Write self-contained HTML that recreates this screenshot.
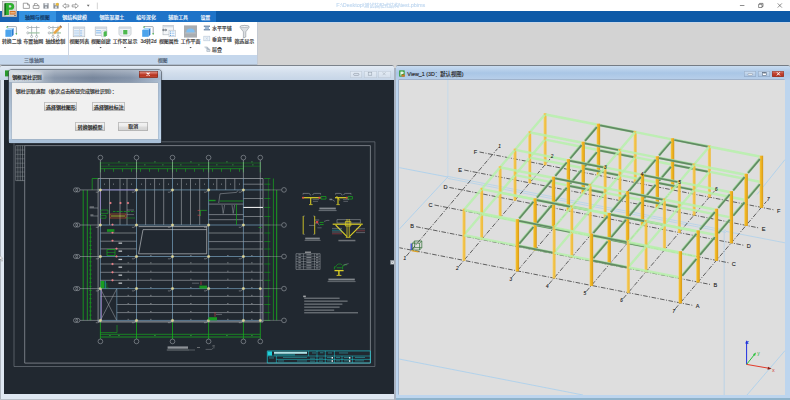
<!DOCTYPE html><html lang="zh"><head><meta charset="utf-8"><title>PBIMS</title><style>html,body{margin:0;padding:0}
body{width:790px;height:400px;overflow:hidden;position:relative;background:#d3d3d3;font-family:"Liberation Sans","Noto Sans CJK SC",sans-serif}
div,span,svg{position:absolute;box-sizing:border-box}
svg.full{left:0;top:0;width:790px;height:400px;overflow:hidden}
svg text{font-family:"Liberation Sans","Noto Sans CJK SC",sans-serif}
.sr{color:transparent;white-space:nowrap;overflow:hidden;height:1.2em;line-height:1.2em;pointer-events:none}
#titlebar{left:0;top:0;width:790px;height:11.2px;background:#fff}
#tabstrip{left:0;top:11.2px;width:790px;height:10.5px;background:#0e5aa7}
#tabstrip .tabs{left:19px;top:0;width:197px;height:10.5px;background:#1e73c8}
#tabstrip .lead{left:0;top:0;width:19px;height:10.5px;background:#1762b2}
#tabstrip .active{left:19px;top:0;width:36.7px;height:10.5px;background:#3491e0}
#ribbon{left:0;top:21.7px;width:257.2px;height:43px;background:#fff;box-shadow:0.6px 0 0 #b9c4d2}
#ribbon .grouprow{left:0;top:33.5px;width:257px;height:8.9px;background:#c5d7ec}
#ribbon .sep{top:1px;width:0.6px;height:41px;background:#ccd5e2}
#ribbonline{left:0;top:21.5px;width:790px;height:0.9px;background:#c9d6e6}
#ribbonbot{left:0;top:64.2px;width:257.4px;height:0.7px;background:#aebccd}
#appbtn{left:1.6px;top:1px;width:15.8px;height:16.3px;background:linear-gradient(#e2e2e2,#cfcfcf);box-shadow:inset 0 0 0 0.6px #9c9c9c}
#winL{left:0;top:65.3px;width:394.3px;height:334.7px;background:#dfe7f1;border-top:1px solid #7c838b;box-shadow:inset 0.7px 0 0 #9aa1a9;border-radius:2.4px 2.4px 0 0;overflow:hidden}
#winL .tb{left:0;top:0;width:394.3px;height:13.6px;background:linear-gradient(#e3ebf5,#d2deec 50%,#c6d5e7)}
#winL .content{left:3.9px;top:13.4px;width:390.2px;height:314.0px;background:#212830}
#winL .bot{left:0;top:332.4px;width:394.3px;height:1.6px;background:#b9c0c8}
#gap{left:394.2px;top:67.5px;width:2.1px;height:335px;background:#a9b3c1}
#winR{left:396.2px;top:65px;width:393.8px;height:334.7px;top:65.3px;background:#bdd5ee;border-top:1px solid #757c84;border-radius:2.4px 2.4px 0 0;overflow:hidden}
#winR .tb{left:0;top:0;width:393.8px;height:13.8px;background:linear-gradient(#c9dcf0,#a9c6e6 50%,#b9d0ea)}
#winR .content{left:2.6px;top:13.6px;width:386.4px;height:315.3px;background:#dedede;box-shadow:-0.5px -0.5px 0 0 #8796aa}
#winR .bot{left:0;top:331.4px;width:393.8px;height:2.6px;background:#8fb3cb}
.wbtn{top:4.4px;height:7.2px;box-shadow:inset 0 0 0 0.5px #b7c3d1;background:linear-gradient(#e4ecf5,#d3deeb);border-radius:1px}
.wbtnR{top:4.6px;height:6.6px;box-shadow:inset 0 0 0 0.5px #8aa2bf;background:linear-gradient(#cfdff0,#a9c3e2);border-radius:1px}
.wbtnR.close{background:linear-gradient(#d9867c,#c2412f 45%,#b0301e);box-shadow:inset 0 0 0 0.5px #8a3a30}
#dlg{left:8.6px;top:70.2px;width:152.4px;height:72.6px;border-radius:2.4px;background:linear-gradient(90deg,#c3ceda,#b0bcc9 16%,#8291a6 30%,#6f7f96 55%,#7d8da4 80%,#a3b6cc);box-shadow:0 0 0 0.6px #46505c,0 0 2.5px rgba(0,0,0,.5)}
#dlg .glass{left:0;top:0;width:100%;height:13px;background:linear-gradient(rgba(255,255,255,.35),rgba(255,255,255,.05) 60%,rgba(255,255,255,.12));border-radius:2px 2px 0 0}
#dlg .frameL{left:0;top:12px;width:3.2px;height:59.4px;background:linear-gradient(#9fb0c4,#c5d5e6)}
#dlg .frameR{right:0;top:12px;width:3.2px;height:59.4px;background:linear-gradient(#a9bed6,#c2d8ee)}
#dlg .frameB{left:0;bottom:0;width:100%;height:3.4px;background:#a9c0d8}
#dlg .client{left:3.4px;top:12.7px;width:145.8px;height:56.3px;background:#f0f0f0;box-shadow:0 0 0 0.4px #9aa6b4}
#dlg .close{left:130.6px;top:0.4px;width:19px;height:7.6px;border-radius:0 0 1.6px 1.6px;background:linear-gradient(#e0a198,#c9503f 45%,#b5301c 55%,#c4523c);box-shadow:inset 0 0 0 0.5px #6d2a22}
.dbtn{height:8.6px;box-shadow:inset 0 0 0 0.55px #9a9a9a;border-radius:1.2px;background:linear-gradient(#f4f4f4,#ececec 48%,#dddddd 52%,#d2d2d2)}
</style></head><body><div id="titlebar"></div><div id="tabstrip"><div class="lead"></div><div class="tabs"></div><div class="active"></div></div><div id="ribbonline"></div><div id="ribbon"><div class="grouprow"></div><div class="sep" style="left:68.2px"></div></div><div id="ribbonbot"></div><div id="appbtn"></div><svg class="full" viewBox="0 0 790 400"><g><path d="M4.3 3.4 L6.0 2.9 L6.0 15.0 L4.3 15.4 Z" fill="#1a6a1e"/><path d="M6.0 2.9 H10.6 Q14.2 3.0 14.2 6.4 Q14.2 9.7 10.6 9.8 H8.9 V15.0 H6.0 Z" fill="#2fb030"/><path d="M8.9 5.2 H10.2 Q11.4 5.3 11.4 6.4 Q11.4 7.5 10.2 7.6 H8.9 Z" fill="#d9d9d9"/><rect x="9.7" y="11" width="5.9" height="3.6" fill="#d8742a"/><rect x="10.4" y="12.2" width="4.4" height="1.2" fill="#f3d9b8" opacity=".8"/><rect x="14.2" y="15.3" width="1.6" height=".7" fill="#444"/></g><path d="M23.3 3.2 H27.6 L29.4 5 V8.4 H23.3 Z M27.6 3.2 V5 H29.4" fill="none" stroke="#7c7c7c" stroke-width=".7"/><path d="M33.2 5.6 H39 V8.4 H33.2 Z M34.4 5.6 V3.6 H36.6 L37.8 4.6 V5.6" fill="none" stroke="#7c7c7c" stroke-width=".7"/><rect x="43.4" y="3.2" width="5.2" height="5.4" fill="#8a8f96"/><rect x="44.6" y="3.2" width="2.8" height="2" fill="#e9eef3"/><rect x="45" y="6.4" width="2" height="2.2" fill="#d8dde3"/><rect x="53.4" y="3.2" width="5.2" height="5.4" fill="#8a8f96"/><rect x="54.6" y="3.2" width="2.8" height="2" fill="#e9eef3"/><rect x="55" y="6.4" width="2" height="2.2" fill="#d8dde3"/><circle cx="57.3" cy="4.3" r="1.5" fill="#e9b93a"/><path d="M62.6 5.9 L65.4 3.5 V4.9 H68.8 V6.9 H65.4 V8.3 Z" fill="none" stroke="#7c7c7c" stroke-width=".7"/><path d="M78.4 5.9 L75.6 3.5 V4.9 H72.2 V6.9 H75.6 V8.3 Z" fill="none" stroke="#7c7c7c" stroke-width=".7"/><path d="M86.8 4.7 H89.6 L88.2 6.7 Z" fill="#6a6a6a"/><rect x="96.9" y="2.6" width=".6" height="6.6" fill="#b5b5b5"/><g opacity="0.72"><text x="336.3" y="7.4" font-size="5.48" fill="#a9c9ea" stroke="#a9c9ea" stroke-width=".15">F:\Desktop\</text><text x="364.34" y="7.4" font-size="4.94" fill="#a9c9ea" stroke="#a9c9ea" stroke-width=".15">测试装配式结构</text><text x="398.92" y="7.4" font-size="5.48" fill="#a9c9ea" stroke="#a9c9ea" stroke-width=".15">\test.pbims</text></g><rect x="739.9" y="5.2" width="4.5" height=".6" fill="#444"/><path d="M758.6 4.3 H762 V7.5 H758.6 Z M759.6 4.3 V3.4 H763 V6.6 H762" fill="none" stroke="#444" stroke-width=".6"/><path d="M777.7 3.4 L781.9 7.6 M781.9 3.4 L777.7 7.6" stroke="#444" stroke-width=".6" fill="none"/><g><text x="25" y="19.3" font-size="4.94" fill="#0d2c52" stroke="#0d2c52" stroke-width=".15">轴网与视图</text></g><g><text x="62.3" y="19.3" font-size="4.94" fill="#fff" stroke="#fff" stroke-width=".15">钢结构建模</text></g><g><text x="99.4" y="19.3" font-size="4.94" fill="#fff" stroke="#fff" stroke-width=".15">钢筋混凝土</text></g><g><text x="136.2" y="19.3" font-size="4.94" fill="#fff" stroke="#fff" stroke-width=".15">编号深化</text></g><g><text x="168.3" y="19.3" font-size="4.94" fill="#fff" stroke="#fff" stroke-width=".15">辅助工具</text></g><g><text x="200.4" y="19.3" font-size="4.94" fill="#fff" stroke="#fff" stroke-width=".15">设置</text></g><g><text x="1.92" y="43.4" font-size="4.94" fill="#2b2b2b" stroke="#2b2b2b" stroke-width=".15">转换二维</text></g><g><text x="23.42" y="43.4" font-size="4.94" fill="#2b2b2b" stroke="#2b2b2b" stroke-width=".15">布置轴网</text></g><g><text x="45.42" y="43.4" font-size="4.94" fill="#2b2b2b" stroke="#2b2b2b" stroke-width=".15">轴线绘制</text></g><g><text x="69.42" y="43.4" font-size="4.94" fill="#2b2b2b" stroke="#2b2b2b" stroke-width=".15">视图列表</text></g><g><text x="90.92" y="43.4" font-size="4.94" fill="#2b2b2b" stroke="#2b2b2b" stroke-width=".15">视图创建</text></g><g><text x="112.65" y="43.4" font-size="4.94" fill="#2b2b2b" stroke="#2b2b2b" stroke-width=".15">工作区显示</text></g><g><text x="140.54" y="43.4" font-size="4.94" fill="#2b2b2b" stroke="#2b2b2b" stroke-width=".15">3d</text><text x="146.03" y="43.4" font-size="4.94" fill="#2b2b2b" stroke="#2b2b2b" stroke-width=".15">转</text><text x="150.97" y="43.4" font-size="4.94" fill="#2b2b2b" stroke="#2b2b2b" stroke-width=".15">2d</text></g><g><text x="158.92" y="43.4" font-size="4.94" fill="#2b2b2b" stroke="#2b2b2b" stroke-width=".15">视图属性</text></g><g><text x="180.72" y="43.4" font-size="4.94" fill="#2b2b2b" stroke="#2b2b2b" stroke-width=".15">工作平面</text></g><g><text x="234.42" y="43.4" font-size="4.94" fill="#2b2b2b" stroke="#2b2b2b" stroke-width=".15">筛选显示</text></g><path d="M99.45 46.9 h2.3 l-1.15 1.4 z" fill="#4a4a4a"/><path d="M123.85 46.9 h2.3 l-1.15 1.4 z" fill="#4a4a4a"/><path d="M189.45 46.9 h2.3 l-1.15 1.4 z" fill="#4a4a4a"/><g><text x="212" y="30.3" font-size="4.94" fill="#2b2b2b" stroke="#2b2b2b" stroke-width=".15">水平平铺</text></g><g><text x="212" y="40.7" font-size="4.94" fill="#2b2b2b" stroke="#2b2b2b" stroke-width=".15">垂直平铺</text></g><g><text x="212" y="51" font-size="4.94" fill="#2b2b2b" stroke="#2b2b2b" stroke-width=".15">层叠</text></g><g><text x="24.12" y="61.6" font-size="4.94" fill="#44546a" stroke="#44546a" stroke-width=".15">三维轴网</text></g><g><text x="157.66" y="61.6" font-size="4.94" fill="#44546a" stroke="#44546a" stroke-width=".15">视图</text></g><g transform="translate(5.4 26)"><path d="M1.6 .6 H10.4 Q11 .6 11 1.2 V7.6" fill="none" stroke="#8b949e" stroke-width=".8"/><path d="M.6 1.6 L1.9 0 L3 1.6 Z" fill="#3aa63e"/><path d="M10 7.2 L11.9 7.2 L10.9 8.9 Z" fill="#3aa63e"/><path d="M0 4 L2.2 2 H8.2 L6.2 4 Z" fill="#a6d6fa"/><path d="M6.2 4 L8.2 2 V8.8 L6.2 10.8 Z" fill="#2a7bd0"/><rect x="0" y="4" width="6.2" height="6.8" fill="#4da4ec"/></g><g transform="translate(142.2 26)"><path d="M1.6 .6 H10.4 Q11 .6 11 1.2 V7.6" fill="none" stroke="#8b949e" stroke-width=".8"/><path d="M.6 1.6 L1.9 0 L3 1.6 Z" fill="#3aa63e"/><path d="M10 7.2 L11.9 7.2 L10.9 8.9 Z" fill="#3aa63e"/><path d="M0 4 L2.2 2 H8.2 L6.2 4 Z" fill="#a6d6fa"/><path d="M6.2 4 L8.2 2 V8.8 L6.2 10.8 Z" fill="#2a7bd0"/><rect x="0" y="4" width="6.2" height="6.8" fill="#4da4ec"/></g><g transform="translate(26.6 25.9)"><path d="M2 1.6 H13 M2 7 H13 M5 0 V10 M10 0 V10" stroke="#9aa3a8" stroke-width=".7" fill="none"/><path d="M2 7 H13" stroke="#9bd49a" stroke-width=".7"/><circle cx="1.2" cy="1.6" r="1.05" fill="#fff" stroke="#7d868c" stroke-width=".5"/><circle cx="1.2" cy="7" r="1.05" fill="#fff" stroke="#7d868c" stroke-width=".5"/><circle cx="5" cy="10.6" r="1.05" fill="#fff" stroke="#7d868c" stroke-width=".5"/><circle cx="10" cy="10.6" r="1.05" fill="#fff" stroke="#7d868c" stroke-width=".5"/></g><g transform="translate(48 25.9)"><path d="M2 1.6 H13 M2 7 H13 M5 0 V10 M10 0 V10" stroke="#9aa3a8" stroke-width=".7" fill="none"/><path d="M2 7 H13" stroke="#9bd49a" stroke-width=".7"/><circle cx="1.2" cy="1.6" r="1.05" fill="#fff" stroke="#7d868c" stroke-width=".5"/><circle cx="1.2" cy="7" r="1.05" fill="#fff" stroke="#7d868c" stroke-width=".5"/><circle cx="5" cy="10.6" r="1.05" fill="#fff" stroke="#7d868c" stroke-width=".5"/><circle cx="10" cy="10.6" r="1.05" fill="#fff" stroke="#7d868c" stroke-width=".5"/><path d="M5.2 6.6 L11.6 .2 L13.3 1.9 L6.9 8.3 Z" fill="#e8a544"/><path d="M11.6 .2 L12.4 -.6 L14.1 1.1 L13.3 1.9 Z" fill="#8a5a3a"/><path d="M5.2 6.6 L6.9 8.3 L4.4 9.1 Z" fill="#f3d8a8"/></g><g transform="translate(73.2 27)"><rect x="0" y="0" width="11.6" height="9.8" fill="#f2f5f8" stroke="#aab2bb" stroke-width=".6"/><rect x=".3" y=".3" width="11" height="1.6" fill="#cfd6de"/><rect x=".9" y="3.2" width="5" height="1.3" fill="#bcd6f1"/><rect x="6.9" y="3.2" width="3.8" height="1.3" fill="#dbe7f4"/><rect x="7.2" y="3.3000000000000003" width="1.2" height="1.1" fill="#7fb1e6"/><rect x=".9" y="5.4" width="5" height="1.3" fill="#bcd6f1"/><rect x="6.9" y="5.4" width="3.8" height="1.3" fill="#dbe7f4"/><rect x="7.2" y="5.5" width="1.2" height="1.1" fill="#7fb1e6"/><rect x=".9" y="7.6" width="5" height="1.3" fill="#bcd6f1"/><rect x="6.9" y="7.6" width="3.8" height="1.3" fill="#dbe7f4"/><rect x="7.2" y="7.699999999999999" width="1.2" height="1.1" fill="#7fb1e6"/><rect x="6.1" y="2" width=".5" height="7.8" fill="#b7bfc8"/></g><g transform="translate(95.2 27)"><rect x="0" y="0" width="11.6" height="8.6" fill="#f2f5f8" stroke="#aab2bb" stroke-width=".6"/><rect x=".3" y=".3" width="11" height="1.6" fill="#cfd6de"/><rect x=".9" y="3.0" width="5" height="1.3" fill="#9cc7f0"/><rect x=".9" y="5.2" width="5" height="1.3" fill="#9cc7f0"/><path d="M6.2 4.6 L8 3.4 H11.6 V8.4 L9.8 9.8 H6.2 Z" fill="#eef1f4" stroke="#aab2bb" stroke-width=".4"/><path d="M8.4 5.2 L9.6 4.2 H11.6 V8.2 L10.4 9.4 H8.4 Z" fill="#4cb84e"/></g><g transform="translate(119 27)"><path d="M0 0 H12 V7.2 L10.4 9 H1.6 L0 7.2 Z" fill="#f2f5f8" stroke="#aab2bb" stroke-width=".6"/><rect x=".3" y=".3" width="11.4" height="1.5" fill="#cfd6de"/><rect x="4.2" y="3" width="4.2" height="4.4" fill="#4cb84e"/><rect x="1" y="3" width="2.4" height="4.4" fill="#dde4ec"/><rect x="9.2" y="3" width="1.9" height="4.4" fill="#dde4ec"/></g><g transform="translate(162 25.6)"><rect x="1" y="0" width="10.6" height="9.2" fill="#f4f6f8" stroke="#aab2bb" stroke-width=".6"/><rect x="1.3" y=".3" width="10" height="1.4" fill="#d4dae1"/><path d="M0 4.4 L1.6 3 V3.9 H3.6 V3 L5.2 4.4 L3.6 5.8 V4.9 H1.6 V5.8 Z" fill="#6b737b"/><rect x="7" y="4.6" width="6.4" height="6.6" fill="#fbfcfd" stroke="#aab2bb" stroke-width=".5"/><rect x="7.9" y="5.8" width="1" height="1" fill="#5b9bd8"/><rect x="9.5" y="5.8999999999999995" width="3" height=".8" fill="#9cc7f0"/><rect x="7.9" y="7.6" width="1" height="1" fill="#5b9bd8"/><rect x="9.5" y="7.699999999999999" width="3" height=".8" fill="#9cc7f0"/><rect x="7.9" y="9.4" width="1" height="1" fill="#5b9bd8"/><rect x="9.5" y="9.5" width="3" height=".8" fill="#9cc7f0"/></g><rect x="184" y="25.4" width="13" height="12.2" fill="#a9adb1"/><path d="M186.2 32.6 Q186.2 28.6 190.5 28.6 Q194.8 28.6 194.8 32.6 Z" fill="#7fbff2"/><path d="M185 33 H196" stroke="#cfd3d6" stroke-width=".5"/><path d="M203.8 26.2 H210 M203.8 29.8 H210" stroke="#3d5f86" stroke-width="1"/><rect x="204.8" y="26.7" width="4.2" height="2.6" fill="#9fb8d4"/><rect x="203.8" y="36.2" width="6" height="4.6" fill="#eaf1f8" stroke="#b7c7d8" stroke-width=".6"/><path d="M205.6 37.4 l2.4 2.2 m0 -2.2 l-2.4 2.2" stroke="#b7c7d8" stroke-width=".5"/><path d="M204.4 47 H207.4 V49 M205.6 48.2 H208.8 V50.2 M206.8 49.4 H210 V51.4 H206.8 Z" fill="#dfe7ef" stroke="#8d9aa8" stroke-width=".5"/><path d="M240.2 26.2 Q244.6 24.4 249 26.2 V27.6 L245.8 31.8 V37 L243.4 38 V31.8 L240.2 27.6 Z" fill="#dcdfe2" stroke="#8e959c" stroke-width=".6"/><ellipse cx="244.6" cy="26.5" rx="4.2" ry="1" fill="#f4f5f6" stroke="#8e959c" stroke-width=".5"/></svg><div id="chrome-text"><span class="sr" style="left:336.3px;top:2.95px;font-size:4.94px;width:90.13px">F:\Desktop\测试装配式结构\test.pbims</span><span class="sr" style="left:25px;top:14.85px;font-size:4.94px;width:25.7px">轴网与视图</span><span class="sr" style="left:62.3px;top:14.85px;font-size:4.94px;width:25.7px">钢结构建模</span><span class="sr" style="left:99.4px;top:14.85px;font-size:4.94px;width:25.7px">钢筋混凝土</span><span class="sr" style="left:136.2px;top:14.85px;font-size:4.94px;width:20.76px">编号深化</span><span class="sr" style="left:168.3px;top:14.85px;font-size:4.94px;width:20.76px">辅助工具</span><span class="sr" style="left:200.4px;top:14.85px;font-size:4.94px;width:10.88px">设置</span><span class="sr" style="left:1.92px;top:38.95px;font-size:4.94px;width:20.76px">转换二维</span><span class="sr" style="left:23.42px;top:38.95px;font-size:4.94px;width:20.76px">布置轴网</span><span class="sr" style="left:45.42px;top:38.95px;font-size:4.94px;width:20.76px">轴线绘制</span><span class="sr" style="left:69.42px;top:38.95px;font-size:4.94px;width:20.76px">视图列表</span><span class="sr" style="left:90.92px;top:38.95px;font-size:4.94px;width:20.76px">视图创建</span><span class="sr" style="left:112.65px;top:38.95px;font-size:4.94px;width:25.7px">工作区显示</span><span class="sr" style="left:140.54px;top:38.95px;font-size:4.94px;width:16.93px">3d转2d</span><span class="sr" style="left:158.92px;top:38.95px;font-size:4.94px;width:20.76px">视图属性</span><span class="sr" style="left:180.72px;top:38.95px;font-size:4.94px;width:20.76px">工作平面</span><span class="sr" style="left:234.42px;top:38.95px;font-size:4.94px;width:20.76px">筛选显示</span><span class="sr" style="left:212px;top:25.85px;font-size:4.94px;width:20.76px">水平平铺</span><span class="sr" style="left:212px;top:36.25px;font-size:4.94px;width:20.76px">垂直平铺</span><span class="sr" style="left:212px;top:46.55px;font-size:4.94px;width:10.88px">层叠</span><span class="sr" style="left:24.12px;top:57.15px;font-size:4.94px;width:20.76px">三维轴网</span><span class="sr" style="left:157.66px;top:57.15px;font-size:4.94px;width:10.88px">视图</span></div><div id="winL"><div class="tb"></div><div class="wbtn" style="left:350.3px;width:12.2px"></div><div class="wbtn" style="left:363.5px;width:13.2px"></div><div class="wbtn" style="left:377.6px;width:13.2px"></div><div class="content"></div><div class="bot"></div></div><div id="gap"></div><svg class="full" viewBox="0 0 790 400"><defs><clipPath id="cadclip"><rect x="3.9" y="79.6" width="390.2" height="314.2"/></clipPath></defs><g fill="none"><rect x="353.6" y="73.4" width="5.4" height="2" rx="1" fill="none" stroke="#7c8794" stroke-width=".5"/><rect x="368.2" y="72.2" width="3.6" height="3" fill="none" stroke="#8d98a5" stroke-width=".5"/><path d="M382.6 72.2 l3 3 m0 -3 l-3 3" stroke="#a6b0bb" stroke-width=".6"/><rect x="5" y="70.4" width="4" height="6" fill="#2a9a2e"/><path d="M14 141.8 H374.9 V366.5 H14 Z" stroke="#7b8289" stroke-width="0.6" fill="none"/><path d="M24.7 145.6 H370.4 V363.1 H24.7 Z" stroke="#989ea5" stroke-width="0.7" fill="none"/><path d="M15.7 145.6 H24.7 M15.7 145.6 V180.6 H24.7" stroke="#a0a6ac" stroke-width="0.5" fill="none"/><path d="M17.9 145.6 L17.9 180.6" stroke="#aab0b6" stroke-width="0.45"/><path d="M20.2 145.6 L20.2 180.6" stroke="#aab0b6" stroke-width="0.45"/><path d="M22.5 145.6 L22.5 180.6" stroke="#aab0b6" stroke-width="0.45"/><path d="M15.7 150 L24.8 150" stroke="#9aa0a6" stroke-width="0.35"/><path d="M15.7 154.4 L24.8 154.4" stroke="#9aa0a6" stroke-width="0.35"/><path d="M15.7 158.8 L24.8 158.8" stroke="#9aa0a6" stroke-width="0.35"/><path d="M15.7 163.2 L24.8 163.2" stroke="#9aa0a6" stroke-width="0.35"/><path d="M15.7 167.6 L24.8 167.6" stroke="#9aa0a6" stroke-width="0.35"/><path d="M15.7 172 L24.8 172" stroke="#9aa0a6" stroke-width="0.35"/><path d="M15.7 176.3 L24.8 176.3" stroke="#9aa0a6" stroke-width="0.35"/><path d="M100.4 163 L260.3 163" stroke="#128319" stroke-width="0.6"/><path d="M100.4 166.2 L260.3 166.2" stroke="#128319" stroke-width="0.6"/><path d="M100.4 168.7 L243.4 168.7" stroke="#17ab1e" stroke-width="0.65"/><path d="M104.5 168.7 L104.5 171.8" stroke="#17ab1e" stroke-width="0.6"/><path d="M113.5 168.7 L113.5 171.8" stroke="#17ab1e" stroke-width="0.6"/><path d="M122.5 168.7 L122.5 171.8" stroke="#17ab1e" stroke-width="0.6"/><path d="M131.5 168.7 L131.5 171.8" stroke="#17ab1e" stroke-width="0.6"/><path d="M140.5 168.7 L140.5 171.8" stroke="#17ab1e" stroke-width="0.6"/><path d="M149.5 168.7 L149.5 171.8" stroke="#17ab1e" stroke-width="0.6"/><path d="M158.5 168.7 L158.5 171.8" stroke="#17ab1e" stroke-width="0.6"/><path d="M167.5 168.7 L167.5 171.8" stroke="#17ab1e" stroke-width="0.6"/><path d="M176.5 168.7 L176.5 171.8" stroke="#17ab1e" stroke-width="0.6"/><path d="M185.5 168.7 L185.5 171.8" stroke="#17ab1e" stroke-width="0.6"/><path d="M194.5 168.7 L194.5 171.8" stroke="#17ab1e" stroke-width="0.6"/><path d="M203.5 168.7 L203.5 171.8" stroke="#17ab1e" stroke-width="0.6"/><path d="M212.5 168.7 L212.5 171.8" stroke="#17ab1e" stroke-width="0.6"/><path d="M221.5 168.7 L221.5 171.8" stroke="#17ab1e" stroke-width="0.6"/><path d="M230.5 168.7 L230.5 171.8" stroke="#17ab1e" stroke-width="0.6"/><path d="M239.5 168.7 L239.5 171.8" stroke="#17ab1e" stroke-width="0.6"/><path d="M100.4 162 L100.4 172.4" stroke="#17ab1e" stroke-width="0.8"/><path d="M136.5 162 L136.5 172.4" stroke="#17ab1e" stroke-width="0.8"/><path d="M172.5 162 L172.5 172.4" stroke="#17ab1e" stroke-width="0.8"/><path d="M208.6 162 L208.6 172.4" stroke="#17ab1e" stroke-width="0.8"/><path d="M243.4 162 L243.4 172.4" stroke="#17ab1e" stroke-width="0.8"/><path d="M260.3 162 L260.3 172.4" stroke="#17ab1e" stroke-width="0.8"/><path d="M100.4 334.3 L260.3 334.3" stroke="#17ab1e" stroke-width="0.7"/><path d="M100.4 337 L260.3 337" stroke="#17ab1e" stroke-width="0.8"/><path d="M100.4 332.6 L117 332.6" stroke="#17ab1e" stroke-width="0.6"/><path d="M117 325 L117 332.6" stroke="#17ab1e" stroke-width="0.6"/><path d="M100.4 322 L100.4 339" stroke="#17ab1e" stroke-width="0.8"/><path d="M136.5 322 L136.5 339" stroke="#17ab1e" stroke-width="0.8"/><path d="M172.5 322 L172.5 339" stroke="#17ab1e" stroke-width="0.8"/><path d="M208.6 322 L208.6 339" stroke="#17ab1e" stroke-width="0.8"/><path d="M243.4 322 L243.4 339" stroke="#17ab1e" stroke-width="0.8"/><path d="M260.3 322 L260.3 339" stroke="#17ab1e" stroke-width="0.8"/><path d="M83.2 190 L83.2 320.4" stroke="#17ab1e" stroke-width="0.8"/><path d="M87.3 190 L87.3 320.4" stroke="#17ab1e" stroke-width="0.8"/><path d="M90.4 225 L90.4 320.4" stroke="#17ab1e" stroke-width="0.7"/><path d="M89.1 229 L91.8 229" stroke="#17ab1e" stroke-width="0.5"/><path d="M89.1 233.1 L91.8 233.1" stroke="#17ab1e" stroke-width="0.5"/><path d="M89.1 237.2 L91.8 237.2" stroke="#17ab1e" stroke-width="0.5"/><path d="M89.1 241.3 L91.8 241.3" stroke="#17ab1e" stroke-width="0.5"/><path d="M89.1 245.4 L91.8 245.4" stroke="#17ab1e" stroke-width="0.5"/><path d="M89.1 249.5 L91.8 249.5" stroke="#17ab1e" stroke-width="0.5"/><path d="M89.1 253.6 L91.8 253.6" stroke="#17ab1e" stroke-width="0.5"/><path d="M89.1 257.7 L91.8 257.7" stroke="#17ab1e" stroke-width="0.5"/><path d="M89.1 261.8 L91.8 261.8" stroke="#17ab1e" stroke-width="0.5"/><path d="M89.1 265.9 L91.8 265.9" stroke="#17ab1e" stroke-width="0.5"/><path d="M89.1 270 L91.8 270" stroke="#17ab1e" stroke-width="0.5"/><path d="M89.1 274.1 L91.8 274.1" stroke="#17ab1e" stroke-width="0.5"/><path d="M89.1 278.2 L91.8 278.2" stroke="#17ab1e" stroke-width="0.5"/><path d="M89.1 282.3 L91.8 282.3" stroke="#17ab1e" stroke-width="0.5"/><path d="M89.1 286.4 L91.8 286.4" stroke="#17ab1e" stroke-width="0.5"/><path d="M89.1 290.5 L91.8 290.5" stroke="#17ab1e" stroke-width="0.5"/><path d="M89.1 294.6 L91.8 294.6" stroke="#17ab1e" stroke-width="0.5"/><path d="M89.1 298.7 L91.8 298.7" stroke="#17ab1e" stroke-width="0.5"/><path d="M89.1 302.8 L91.8 302.8" stroke="#17ab1e" stroke-width="0.5"/><path d="M89.1 306.9 L91.8 306.9" stroke="#17ab1e" stroke-width="0.5"/><path d="M89.1 311 L91.8 311" stroke="#17ab1e" stroke-width="0.5"/><path d="M89.1 315.1 L91.8 315.1" stroke="#17ab1e" stroke-width="0.5"/><path d="M89.1 319.2 L91.8 319.2" stroke="#17ab1e" stroke-width="0.5"/><path d="M92.2 178.5 L92.2 190" stroke="#17ab1e" stroke-width="0.7"/><path d="M92.2 178.5 L98 178.5" stroke="#17ab1e" stroke-width="0.7"/><path d="M268.4 178.5 L268.4 320.4" stroke="#128319" stroke-width="0.6"/><path d="M273.4 178.5 L273.4 320.4" stroke="#17ab1e" stroke-width="0.7"/><path d="M276.7 190 L276.7 320.4" stroke="#17ab1e" stroke-width="0.9"/><path d="M264.2 178.5 L270.4 178.5" stroke="#17ab1e" stroke-width="0.55"/><path d="M264.2 184.2 L270.4 184.2" stroke="#17ab1e" stroke-width="0.55"/><path d="M264.2 189.9 L270.4 189.9" stroke="#17ab1e" stroke-width="0.55"/><path d="M264.2 198.5 L270.4 198.5" stroke="#17ab1e" stroke-width="0.55"/><path d="M264.2 207.4 L270.4 207.4" stroke="#17ab1e" stroke-width="0.55"/><path d="M264.2 216.5 L270.4 216.5" stroke="#17ab1e" stroke-width="0.55"/><path d="M264.2 225 L270.4 225" stroke="#17ab1e" stroke-width="0.55"/><path d="M264.2 233 L270.4 233" stroke="#17ab1e" stroke-width="0.55"/><path d="M264.2 241.6 L270.4 241.6" stroke="#17ab1e" stroke-width="0.55"/><path d="M264.2 249 L270.4 249" stroke="#17ab1e" stroke-width="0.55"/><path d="M264.2 256.5 L270.4 256.5" stroke="#17ab1e" stroke-width="0.55"/><path d="M264.2 264 L270.4 264" stroke="#17ab1e" stroke-width="0.55"/><path d="M264.2 272.3 L270.4 272.3" stroke="#17ab1e" stroke-width="0.55"/><path d="M264.2 280.3 L270.4 280.3" stroke="#17ab1e" stroke-width="0.55"/><path d="M264.2 288.6 L270.4 288.6" stroke="#17ab1e" stroke-width="0.55"/><path d="M264.2 296.4 L270.4 296.4" stroke="#17ab1e" stroke-width="0.55"/><path d="M264.2 304.5 L270.4 304.5" stroke="#17ab1e" stroke-width="0.55"/><path d="M264.2 312.6 L270.4 312.6" stroke="#17ab1e" stroke-width="0.55"/><path d="M264.2 320.4 L270.4 320.4" stroke="#17ab1e" stroke-width="0.55"/><circle cx="100.4" cy="157.6" r="2.35" stroke="#a6abb0" stroke-width="0.55" fill="none"/><path d="M100.4 160 L100.4 178.5" stroke="#a6abb0" stroke-width="0.6"/><circle cx="100.4" cy="341.4" r="2.35" stroke="#a6abb0" stroke-width="0.55" fill="none"/><circle cx="136.5" cy="157.6" r="2.35" stroke="#a6abb0" stroke-width="0.55" fill="none"/><path d="M136.5 160 L136.5 178.5" stroke="#a6abb0" stroke-width="0.6"/><circle cx="136.5" cy="341.4" r="2.35" stroke="#a6abb0" stroke-width="0.55" fill="none"/><circle cx="172.5" cy="157.6" r="2.35" stroke="#a6abb0" stroke-width="0.55" fill="none"/><path d="M172.5 160 L172.5 178.5" stroke="#a6abb0" stroke-width="0.6"/><circle cx="172.5" cy="341.4" r="2.35" stroke="#a6abb0" stroke-width="0.55" fill="none"/><circle cx="208.6" cy="157.6" r="2.35" stroke="#a6abb0" stroke-width="0.55" fill="none"/><path d="M208.6 160 L208.6 178.5" stroke="#a6abb0" stroke-width="0.6"/><circle cx="208.6" cy="341.4" r="2.35" stroke="#a6abb0" stroke-width="0.55" fill="none"/><circle cx="243.4" cy="157.6" r="2.35" stroke="#a6abb0" stroke-width="0.55" fill="none"/><path d="M243.4 160 L243.4 178.5" stroke="#a6abb0" stroke-width="0.6"/><circle cx="243.4" cy="341.4" r="2.35" stroke="#a6abb0" stroke-width="0.55" fill="none"/><circle cx="260.3" cy="157.6" r="2.35" stroke="#a6abb0" stroke-width="0.55" fill="none"/><path d="M260.3 160 L260.3 178.5" stroke="#a6abb0" stroke-width="0.6"/><circle cx="260.3" cy="341.4" r="2.35" stroke="#a6abb0" stroke-width="0.55" fill="none"/><circle cx="75.6" cy="189.9" r="2.1" stroke="#a6abb0" stroke-width="0.55" fill="none"/><circle cx="77.8" cy="189.9" r="2.1" stroke="#a6abb0" stroke-width="0.55" fill="none"/><path d="M80 189.9 L100.4 189.9" stroke="#a6abb0" stroke-width="0.55"/><circle cx="284" cy="189.9" r="2.35" stroke="#a6abb0" stroke-width="0.55" fill="none"/><path d="M263 189.9 L281.6 189.9" stroke="#a6abb0" stroke-width="0.5" opacity="0.8"/><circle cx="75.6" cy="225" r="2.1" stroke="#a6abb0" stroke-width="0.55" fill="none"/><circle cx="77.8" cy="225" r="2.1" stroke="#a6abb0" stroke-width="0.55" fill="none"/><path d="M80 225 L100.4 225" stroke="#a6abb0" stroke-width="0.55"/><circle cx="284" cy="225" r="2.35" stroke="#a6abb0" stroke-width="0.55" fill="none"/><path d="M263 225 L281.6 225" stroke="#a6abb0" stroke-width="0.5" opacity="0.8"/><circle cx="75.6" cy="256.5" r="2.1" stroke="#a6abb0" stroke-width="0.55" fill="none"/><circle cx="77.8" cy="256.5" r="2.1" stroke="#a6abb0" stroke-width="0.55" fill="none"/><path d="M80 256.5 L100.4 256.5" stroke="#a6abb0" stroke-width="0.55"/><circle cx="284" cy="256.5" r="2.35" stroke="#a6abb0" stroke-width="0.55" fill="none"/><path d="M263 256.5 L281.6 256.5" stroke="#a6abb0" stroke-width="0.5" opacity="0.8"/><circle cx="75.6" cy="288.6" r="2.1" stroke="#a6abb0" stroke-width="0.55" fill="none"/><circle cx="77.8" cy="288.6" r="2.1" stroke="#a6abb0" stroke-width="0.55" fill="none"/><path d="M80 288.6 L100.4 288.6" stroke="#a6abb0" stroke-width="0.55"/><circle cx="284" cy="288.6" r="2.35" stroke="#a6abb0" stroke-width="0.55" fill="none"/><path d="M263 288.6 L281.6 288.6" stroke="#a6abb0" stroke-width="0.5" opacity="0.8"/><circle cx="75.6" cy="320.4" r="2.1" stroke="#a6abb0" stroke-width="0.55" fill="none"/><circle cx="77.8" cy="320.4" r="2.1" stroke="#a6abb0" stroke-width="0.55" fill="none"/><path d="M80 320.4 L100.4 320.4" stroke="#a6abb0" stroke-width="0.55"/><circle cx="284" cy="320.4" r="2.35" stroke="#a6abb0" stroke-width="0.55" fill="none"/><path d="M263 320.4 L281.6 320.4" stroke="#a6abb0" stroke-width="0.5" opacity="0.8"/><path d="M98.1 322 V178.5 H263 V322" stroke="#a6abb0" stroke-width="0.7" fill="none"/><path d="M98.1 321.9 L263 321.9" stroke="#d2d5d8" stroke-width="0.7"/><path d="M109.5 178.5 L109.5 225" stroke="#a6abb0" stroke-width="0.6"/><path d="M120 178.5 L120 225" stroke="#a6abb0" stroke-width="0.6"/><path d="M127 178.5 L127 225" stroke="#a6abb0" stroke-width="0.6"/><path d="M145.6 178.5 L145.6 225" stroke="#a6abb0" stroke-width="0.6"/><path d="M154.6 178.5 L154.6 225" stroke="#a6abb0" stroke-width="0.6"/><path d="M163.7 178.5 L163.7 225" stroke="#a6abb0" stroke-width="0.6"/><path d="M181.4 178.5 L181.4 225" stroke="#a6abb0" stroke-width="0.6"/><path d="M190.5 178.5 L190.5 225" stroke="#a6abb0" stroke-width="0.6"/><path d="M199.7 178.5 L199.7 225" stroke="#a6abb0" stroke-width="0.6"/><path d="M216.8 178.5 L216.8 190" stroke="#a6abb0" stroke-width="0.6"/><path d="M225.7 178.5 L225.7 190" stroke="#a6abb0" stroke-width="0.6"/><path d="M234.8 178.5 L234.8 190" stroke="#a6abb0" stroke-width="0.6"/><path d="M100.4 178.5 L100.4 322" stroke="#7199b6" stroke-width="0.75"/><path d="M136.5 178.5 L136.5 322" stroke="#7199b6" stroke-width="0.75"/><path d="M172.5 178.5 L172.5 322" stroke="#7199b6" stroke-width="0.75"/><path d="M208.6 178.5 L208.6 322" stroke="#7199b6" stroke-width="0.75"/><path d="M243.4 178.5 L243.4 322" stroke="#7199b6" stroke-width="0.75"/><path d="M260.3 178.5 L260.3 322" stroke="#aab4bd" stroke-width="0.6"/><path d="M98.1 189.9 L263 189.9" stroke="#7199b6" stroke-width="0.75"/><path d="M98.1 225 L263 225" stroke="#7199b6" stroke-width="0.75"/><path d="M98.1 256.5 L263 256.5" stroke="#7199b6" stroke-width="0.75"/><path d="M98.1 288.6 L263 288.6" stroke="#7199b6" stroke-width="0.75"/><path d="M98.1 320.4 L263 320.4" stroke="#7199b6" stroke-width="0.75"/><path d="M100.4 189.9 L136.5 189.9" stroke="#a286cb" stroke-width="0.8"/><path d="M100.4 190 L100.4 225" stroke="#a286cb" stroke-width="0.8"/><path d="M101.4 289 L101.4 320" stroke="#a286cb" stroke-width="0.8"/><path d="M262 289 L262 320" stroke="#a286cb" stroke-width="0.6" opacity="0.8"/><path d="M100.4 233 L136.5 233" stroke="#a6abb0" stroke-width="0.6"/><path d="M100.4 241.2 L136.5 241.2" stroke="#a6abb0" stroke-width="0.6"/><path d="M100.4 248.9 L136.5 248.9" stroke="#a6abb0" stroke-width="0.6"/><path d="M100.4 264 L263 264" stroke="#a6abb0" stroke-width="0.6"/><path d="M100.4 272.3 L263 272.3" stroke="#a6abb0" stroke-width="0.6"/><path d="M100.4 280.3 L263 280.3" stroke="#a6abb0" stroke-width="0.6"/><path d="M116.8 296.4 L263 296.4" stroke="#a6abb0" stroke-width="0.6"/><path d="M116.8 304.5 L263 304.5" stroke="#a6abb0" stroke-width="0.6"/><path d="M116.8 312.6 L263 312.6" stroke="#a6abb0" stroke-width="0.6"/><path d="M100.4 296.4 L116.8 296.4" stroke="#a6abb0" stroke-width="0.5"/><path d="M116.8 288.6 L116.8 320.4" stroke="#7199b6" stroke-width="0.7"/><path d="M100.6 289 L116.6 320.2 M116.6 289 L100.6 320.2" stroke="#a6abb0" stroke-width="0.5" fill="none"/><path d="M208.6 204.1 L243.4 204.1" stroke="#a6abb0" stroke-width="0.6"/><path d="M208.6 214.6 L243.4 214.6" stroke="#a6abb0" stroke-width="0.6"/><path d="M208.6 219.7 L243.4 219.7" stroke="#a6abb0" stroke-width="0.6"/><path d="M208.6 233 L243.4 233" stroke="#a6abb0" stroke-width="0.6"/><path d="M208.6 241.6 L243.4 241.6" stroke="#a6abb0" stroke-width="0.6"/><path d="M208.6 249 L243.4 249" stroke="#a6abb0" stroke-width="0.6"/><path d="M243.4 184.2 L263 184.2" stroke="#a6abb0" stroke-width="0.6"/><path d="M243.4 198.5 L263 198.5" stroke="#a6abb0" stroke-width="0.6"/><path d="M243.4 216.5 L263 216.5" stroke="#a6abb0" stroke-width="0.6"/><path d="M243.4 233 L263 233" stroke="#a6abb0" stroke-width="0.6"/><path d="M243.4 241.6 L263 241.6" stroke="#a6abb0" stroke-width="0.6"/><path d="M243.4 249 L263 249" stroke="#a6abb0" stroke-width="0.6"/><path d="M243.4 207.4 L263 207.4" stroke="#fff" stroke-width="1.0"/><path d="M138.6 226.6 H206.7 V253.8 H138.6 L143 229.6 H206.7" stroke="#d2d5d8" stroke-width="0.6" fill="none"/><path d="M218.7 203 L220 193.8 L236.5 192.4 L238 190.4" stroke="#a6abb0" stroke-width="0.5" fill="none"/><path d="M222 205 L223.2 213.5 L224.6 205 M232 205 L233.2 213.5 L234.6 205" stroke="#a6abb0" stroke-width="0.45" fill="none"/><circle cx="100.4" cy="189.9" r="1.25" stroke="#dfd9a4" stroke-width="0.3" fill="#dcd596"/><path d="M99.8 190.8 l-2.2 1.4 h-1.8" stroke="#d8dadc" stroke-width="0.4" fill="none"/><circle cx="100.4" cy="225" r="1.25" stroke="#dfd9a4" stroke-width="0.3" fill="#dcd596"/><path d="M99.8 225.9 l-2.2 1.4 h-1.8" stroke="#d8dadc" stroke-width="0.4" fill="none"/><circle cx="100.4" cy="256.5" r="1.25" stroke="#dfd9a4" stroke-width="0.3" fill="#dcd596"/><path d="M99.8 257.4 l-2.2 1.4 h-1.8" stroke="#d8dadc" stroke-width="0.4" fill="none"/><circle cx="100.4" cy="288.6" r="1.25" stroke="#dfd9a4" stroke-width="0.3" fill="#dcd596"/><path d="M99.8 289.5 l-2.2 1.4 h-1.8" stroke="#d8dadc" stroke-width="0.4" fill="none"/><circle cx="100.4" cy="320.4" r="1.25" stroke="#dfd9a4" stroke-width="0.3" fill="#dcd596"/><path d="M99.8 321.3 l-2.2 1.4 h-1.8" stroke="#d8dadc" stroke-width="0.4" fill="none"/><circle cx="136.5" cy="189.9" r="1.25" stroke="#dfd9a4" stroke-width="0.3" fill="#dcd596"/><path d="M135.9 190.8 l-2.2 1.4 h-1.8" stroke="#d8dadc" stroke-width="0.4" fill="none"/><circle cx="136.5" cy="225" r="1.25" stroke="#dfd9a4" stroke-width="0.3" fill="#dcd596"/><path d="M135.9 225.9 l-2.2 1.4 h-1.8" stroke="#d8dadc" stroke-width="0.4" fill="none"/><circle cx="136.5" cy="256.5" r="1.25" stroke="#dfd9a4" stroke-width="0.3" fill="#dcd596"/><path d="M135.9 257.4 l-2.2 1.4 h-1.8" stroke="#d8dadc" stroke-width="0.4" fill="none"/><circle cx="136.5" cy="288.6" r="1.25" stroke="#dfd9a4" stroke-width="0.3" fill="#dcd596"/><path d="M135.9 289.5 l-2.2 1.4 h-1.8" stroke="#d8dadc" stroke-width="0.4" fill="none"/><circle cx="136.5" cy="320.4" r="1.25" stroke="#dfd9a4" stroke-width="0.3" fill="#dcd596"/><path d="M135.9 321.3 l-2.2 1.4 h-1.8" stroke="#d8dadc" stroke-width="0.4" fill="none"/><circle cx="172.5" cy="189.9" r="1.25" stroke="#dfd9a4" stroke-width="0.3" fill="#dcd596"/><path d="M171.9 190.8 l-2.2 1.4 h-1.8" stroke="#d8dadc" stroke-width="0.4" fill="none"/><circle cx="172.5" cy="225" r="1.25" stroke="#dfd9a4" stroke-width="0.3" fill="#dcd596"/><path d="M171.9 225.9 l-2.2 1.4 h-1.8" stroke="#d8dadc" stroke-width="0.4" fill="none"/><circle cx="172.5" cy="256.5" r="1.25" stroke="#dfd9a4" stroke-width="0.3" fill="#dcd596"/><path d="M171.9 257.4 l-2.2 1.4 h-1.8" stroke="#d8dadc" stroke-width="0.4" fill="none"/><circle cx="172.5" cy="288.6" r="1.25" stroke="#dfd9a4" stroke-width="0.3" fill="#dcd596"/><path d="M171.9 289.5 l-2.2 1.4 h-1.8" stroke="#d8dadc" stroke-width="0.4" fill="none"/><circle cx="172.5" cy="320.4" r="1.25" stroke="#dfd9a4" stroke-width="0.3" fill="#dcd596"/><path d="M171.9 321.3 l-2.2 1.4 h-1.8" stroke="#d8dadc" stroke-width="0.4" fill="none"/><circle cx="208.6" cy="189.9" r="1.25" stroke="#dfd9a4" stroke-width="0.3" fill="#dcd596"/><path d="M208 190.8 l-2.2 1.4 h-1.8" stroke="#d8dadc" stroke-width="0.4" fill="none"/><circle cx="208.6" cy="225" r="1.25" stroke="#dfd9a4" stroke-width="0.3" fill="#dcd596"/><path d="M208 225.9 l-2.2 1.4 h-1.8" stroke="#d8dadc" stroke-width="0.4" fill="none"/><circle cx="208.6" cy="256.5" r="1.25" stroke="#dfd9a4" stroke-width="0.3" fill="#dcd596"/><path d="M208 257.4 l-2.2 1.4 h-1.8" stroke="#d8dadc" stroke-width="0.4" fill="none"/><circle cx="208.6" cy="288.6" r="1.25" stroke="#dfd9a4" stroke-width="0.3" fill="#dcd596"/><path d="M208 289.5 l-2.2 1.4 h-1.8" stroke="#d8dadc" stroke-width="0.4" fill="none"/><circle cx="208.6" cy="320.4" r="1.25" stroke="#dfd9a4" stroke-width="0.3" fill="#dcd596"/><path d="M208 321.3 l-2.2 1.4 h-1.8" stroke="#d8dadc" stroke-width="0.4" fill="none"/><circle cx="243.4" cy="189.9" r="1.25" stroke="#dfd9a4" stroke-width="0.3" fill="#dcd596"/><path d="M242.8 190.8 l-2.2 1.4 h-1.8" stroke="#d8dadc" stroke-width="0.4" fill="none"/><circle cx="243.4" cy="225" r="1.25" stroke="#dfd9a4" stroke-width="0.3" fill="#dcd596"/><path d="M242.8 225.9 l-2.2 1.4 h-1.8" stroke="#d8dadc" stroke-width="0.4" fill="none"/><circle cx="243.4" cy="256.5" r="1.25" stroke="#dfd9a4" stroke-width="0.3" fill="#dcd596"/><path d="M242.8 257.4 l-2.2 1.4 h-1.8" stroke="#d8dadc" stroke-width="0.4" fill="none"/><circle cx="243.4" cy="288.6" r="1.25" stroke="#dfd9a4" stroke-width="0.3" fill="#dcd596"/><path d="M242.8 289.5 l-2.2 1.4 h-1.8" stroke="#d8dadc" stroke-width="0.4" fill="none"/><circle cx="243.4" cy="320.4" r="1.25" stroke="#dfd9a4" stroke-width="0.3" fill="#dcd596"/><path d="M242.8 321.3 l-2.2 1.4 h-1.8" stroke="#d8dadc" stroke-width="0.4" fill="none"/><circle cx="260.3" cy="288.6" r="1.2" stroke="#dfd9a4" stroke-width="0.3" fill="#dcd596"/><circle cx="260.3" cy="320.4" r="1.2" stroke="#dfd9a4" stroke-width="0.3" fill="#dcd596"/><rect x="100.8" y="210" width="7.2" height="3.4" fill="none"/><path d="M100.8 210 h7.2 v3.4 h-7.2 z" stroke="#17ab1e" stroke-width="0.6" fill="none"/><path d="M100.8 215.4 h5.2 v2.8 h-5.2 z" stroke="#17ab1e" stroke-width="0.6" fill="none"/><path d="M110 214 h16 v4 h-16 z" stroke="#d6502a" stroke-width="0.6" fill="none"/><path d="M111 216 L125 216" stroke="#d9cc26" stroke-width="0.8"/><path d="M113 211.5 H135" stroke="#17ab1e" stroke-width=".7" stroke-dasharray="2.4 1.2"/><path d="M126 218 L135 218" stroke="#17ab1e" stroke-width="0.5"/><circle cx="110.5" cy="203" r="0.95" stroke="#f08a90" stroke-width="0.2" fill="#ee7f88"/><circle cx="120.5" cy="203" r="0.95" stroke="#f08a90" stroke-width="0.2" fill="#ee7f88"/><circle cx="128" cy="203" r="0.95" stroke="#f08a90" stroke-width="0.2" fill="#ee7f88"/><circle cx="112.5" cy="224.6" r="0.95" stroke="#f08a90" stroke-width="0.2" fill="#ee7f88"/><circle cx="112.5" cy="232.6" r="0.95" stroke="#f08a90" stroke-width="0.2" fill="#ee7f88"/><circle cx="112.5" cy="240.6" r="0.95" stroke="#f08a90" stroke-width="0.2" fill="#ee7f88"/><circle cx="116.5" cy="248.6" r="0.95" stroke="#f08a90" stroke-width="0.2" fill="#ee7f88"/><circle cx="116.5" cy="256.4" r="0.95" stroke="#f08a90" stroke-width="0.2" fill="#ee7f88"/><circle cx="112.5" cy="264" r="0.95" stroke="#f08a90" stroke-width="0.2" fill="#ee7f88"/><circle cx="112.5" cy="272.3" r="0.95" stroke="#f08a90" stroke-width="0.2" fill="#ee7f88"/><circle cx="112.5" cy="280.3" r="0.95" stroke="#f08a90" stroke-width="0.2" fill="#ee7f88"/><path d="M107 249.5 h8 v6 h-8 z" stroke="#17ab1e" stroke-width="0.7" fill="none"/><path d="M107 252.5 L115 252.5" stroke="#17ab1e" stroke-width="0.5"/><rect x="100.6" y="281" width="3.8" height="7.2" fill="#17ab1e" opacity="0.9"/><path d="M105.3 281 L105.3 288.4" stroke="#1fd2dc" stroke-width="0.6"/><path d="M106.8 283 v5 h2" stroke="#17ab1e" stroke-width="0.5" fill="none"/><rect x="107" y="229.2" width="7.4" height="2.6" fill="#17ab1e" opacity="0.8"/><path d="M89.5 208 L98 208" stroke="#a6abb0" stroke-width="0.5"/><path d="M90.5 216 L98 216" stroke="#a6abb0" stroke-width="0.5"/><rect x="89.6" y="206.6" width="4.4" height="0.8" fill="#ddd" opacity="0.7"/><rect x="90.4" y="214.6" width="3" height="0.8" fill="#ddd" opacity="0.7"/><path d="M127 210 L134 210" stroke="#a6abb0" stroke-width="0.45"/><path d="M127 214.6 L134 214.6" stroke="#a6abb0" stroke-width="0.45"/><path d="M220 201 L243.4 201" stroke="#17ab1e" stroke-width="0.7"/><path d="M236.5 204 L236.5 225" stroke="#17ab1e" stroke-width="0.7"/><rect x="208.6" y="199.8" width="7" height="1.4" fill="#17ab1e" opacity="0.8"/><path d="M200.4 216 v-5.6 h6.4" stroke="#17ab1e" stroke-width="0.7" fill="none"/><path d="M197.6 210.4 L200.4 210.4" stroke="#e0454a" stroke-width="0.6"/><path d="M197.6 215.2 L200.4 215.2" stroke="#e0454a" stroke-width="0.6"/><rect x="208.4" y="317.2" width="8.6" height="3.2" fill="#17ab1e" opacity="0.85"/><path d="M215 312.2 L215 316.8" stroke="#e0454a" stroke-width="0.6"/><path d="M216 314.4 L222 314.4" stroke="#a6abb0" stroke-width="0.45"/><rect x="199.4" y="285.6" width="7.6" height="3" fill="#17ab1e" opacity="0.8"/><path d="M201 281.4 L201 285" stroke="#e0454a" stroke-width="0.6"/><path d="M192 283.2 L199 283.2" stroke="#a6abb0" stroke-width="0.45"/><rect x="258.6" y="227" width="3" height="1" fill="#17ab1e" opacity="0.7"/><rect x="127.5" y="262.5" width="1.6" height="0.7" fill="#cfd3d7" opacity="0.55"/><rect x="150" y="262.5" width="1.6" height="0.7" fill="#cfd3d7" opacity="0.55"/><rect x="190" y="262.5" width="1.6" height="0.7" fill="#cfd3d7" opacity="0.55"/><rect x="227" y="262.5" width="1.6" height="0.7" fill="#cfd3d7" opacity="0.55"/><rect x="251" y="262.5" width="1.6" height="0.7" fill="#cfd3d7" opacity="0.55"/><rect x="127.5" y="270.8" width="1.6" height="0.7" fill="#cfd3d7" opacity="0.55"/><rect x="150" y="270.8" width="1.6" height="0.7" fill="#cfd3d7" opacity="0.55"/><rect x="190" y="270.8" width="1.6" height="0.7" fill="#cfd3d7" opacity="0.55"/><rect x="227" y="270.8" width="1.6" height="0.7" fill="#cfd3d7" opacity="0.55"/><rect x="251" y="270.8" width="1.6" height="0.7" fill="#cfd3d7" opacity="0.55"/><rect x="127.5" y="278.8" width="1.6" height="0.7" fill="#cfd3d7" opacity="0.55"/><rect x="150" y="278.8" width="1.6" height="0.7" fill="#cfd3d7" opacity="0.55"/><rect x="190" y="278.8" width="1.6" height="0.7" fill="#cfd3d7" opacity="0.55"/><rect x="227" y="278.8" width="1.6" height="0.7" fill="#cfd3d7" opacity="0.55"/><rect x="251" y="278.8" width="1.6" height="0.7" fill="#cfd3d7" opacity="0.55"/><rect x="127.5" y="294.9" width="1.6" height="0.7" fill="#cfd3d7" opacity="0.55"/><rect x="150" y="294.9" width="1.6" height="0.7" fill="#cfd3d7" opacity="0.55"/><rect x="190" y="294.9" width="1.6" height="0.7" fill="#cfd3d7" opacity="0.55"/><rect x="227" y="294.9" width="1.6" height="0.7" fill="#cfd3d7" opacity="0.55"/><rect x="251" y="294.9" width="1.6" height="0.7" fill="#cfd3d7" opacity="0.55"/><rect x="127.5" y="303" width="1.6" height="0.7" fill="#cfd3d7" opacity="0.55"/><rect x="150" y="303" width="1.6" height="0.7" fill="#cfd3d7" opacity="0.55"/><rect x="190" y="303" width="1.6" height="0.7" fill="#cfd3d7" opacity="0.55"/><rect x="227" y="303" width="1.6" height="0.7" fill="#cfd3d7" opacity="0.55"/><rect x="251" y="303" width="1.6" height="0.7" fill="#cfd3d7" opacity="0.55"/><rect x="127.5" y="311.1" width="1.6" height="0.7" fill="#cfd3d7" opacity="0.55"/><rect x="150" y="311.1" width="1.6" height="0.7" fill="#cfd3d7" opacity="0.55"/><rect x="190" y="311.1" width="1.6" height="0.7" fill="#cfd3d7" opacity="0.55"/><rect x="227" y="311.1" width="1.6" height="0.7" fill="#cfd3d7" opacity="0.55"/><rect x="251" y="311.1" width="1.6" height="0.7" fill="#cfd3d7" opacity="0.55"/><rect x="127.5" y="287.1" width="1.6" height="0.7" fill="#cfd3d7" opacity="0.55"/><rect x="150" y="287.1" width="1.6" height="0.7" fill="#cfd3d7" opacity="0.55"/><rect x="190" y="287.1" width="1.6" height="0.7" fill="#cfd3d7" opacity="0.55"/><rect x="227" y="287.1" width="1.6" height="0.7" fill="#cfd3d7" opacity="0.55"/><rect x="251" y="287.1" width="1.6" height="0.7" fill="#cfd3d7" opacity="0.55"/><rect x="127.5" y="318.9" width="1.6" height="0.7" fill="#cfd3d7" opacity="0.55"/><rect x="150" y="318.9" width="1.6" height="0.7" fill="#cfd3d7" opacity="0.55"/><rect x="190" y="318.9" width="1.6" height="0.7" fill="#cfd3d7" opacity="0.55"/><rect x="227" y="318.9" width="1.6" height="0.7" fill="#cfd3d7" opacity="0.55"/><rect x="251" y="318.9" width="1.6" height="0.7" fill="#cfd3d7" opacity="0.55"/><rect x="127.5" y="255" width="1.6" height="0.7" fill="#cfd3d7" opacity="0.55"/><rect x="150" y="255" width="1.6" height="0.7" fill="#cfd3d7" opacity="0.55"/><rect x="190" y="255" width="1.6" height="0.7" fill="#cfd3d7" opacity="0.55"/><rect x="227" y="255" width="1.6" height="0.7" fill="#cfd3d7" opacity="0.55"/><rect x="251" y="255" width="1.6" height="0.7" fill="#cfd3d7" opacity="0.55"/><rect x="118.5" y="242.5" width="3.6" height="1.3" fill="#e8eaec" opacity="0.8"/><rect x="118.5" y="250.5" width="3.6" height="1.3" fill="#e8eaec" opacity="0.8"/><rect x="118.5" y="258.8" width="3.6" height="1.3" fill="#e8eaec" opacity="0.8"/><rect x="118.5" y="266.5" width="3.6" height="1.3" fill="#e8eaec" opacity="0.8"/><rect x="118.5" y="274.5" width="3.6" height="1.3" fill="#e8eaec" opacity="0.8"/><rect x="118.5" y="282.5" width="3.6" height="1.3" fill="#e8eaec" opacity="0.8"/><rect x="104" y="183.4" width="0.7" height="1.6" fill="#cfd3d7" opacity="0.5"/><rect x="113" y="183.4" width="0.7" height="1.6" fill="#cfd3d7" opacity="0.5"/><rect x="123" y="183.4" width="0.7" height="1.6" fill="#cfd3d7" opacity="0.5"/><rect x="131" y="183.4" width="0.7" height="1.6" fill="#cfd3d7" opacity="0.5"/><rect x="141" y="183.4" width="0.7" height="1.6" fill="#cfd3d7" opacity="0.5"/><rect x="150" y="183.4" width="0.7" height="1.6" fill="#cfd3d7" opacity="0.5"/><rect x="159" y="183.4" width="0.7" height="1.6" fill="#cfd3d7" opacity="0.5"/><rect x="168" y="183.4" width="0.7" height="1.6" fill="#cfd3d7" opacity="0.5"/><rect x="177" y="183.4" width="0.7" height="1.6" fill="#cfd3d7" opacity="0.5"/><rect x="186" y="183.4" width="0.7" height="1.6" fill="#cfd3d7" opacity="0.5"/><rect x="195" y="183.4" width="0.7" height="1.6" fill="#cfd3d7" opacity="0.5"/><rect x="204" y="183.4" width="0.7" height="1.6" fill="#cfd3d7" opacity="0.5"/><rect x="213" y="183.4" width="0.7" height="1.6" fill="#cfd3d7" opacity="0.5"/><rect x="221" y="183.4" width="0.7" height="1.6" fill="#cfd3d7" opacity="0.5"/><rect x="230" y="183.4" width="0.7" height="1.6" fill="#cfd3d7" opacity="0.5"/><rect x="239" y="183.4" width="0.7" height="1.6" fill="#cfd3d7" opacity="0.5"/><rect x="108" y="164.6" width="1.6" height="0.6" fill="#4fd455" opacity="0.7"/><rect x="126" y="164.6" width="1.6" height="0.6" fill="#4fd455" opacity="0.7"/><rect x="144" y="164.6" width="1.6" height="0.6" fill="#4fd455" opacity="0.7"/><rect x="162" y="164.6" width="1.6" height="0.6" fill="#4fd455" opacity="0.7"/><rect x="180" y="164.6" width="1.6" height="0.6" fill="#4fd455" opacity="0.7"/><rect x="198" y="164.6" width="1.6" height="0.6" fill="#4fd455" opacity="0.7"/><rect x="216" y="164.6" width="1.6" height="0.6" fill="#4fd455" opacity="0.7"/><rect x="232" y="164.6" width="1.6" height="0.6" fill="#4fd455" opacity="0.7"/><rect x="252" y="164.6" width="1.6" height="0.6" fill="#4fd455" opacity="0.7"/><rect x="118" y="161.6" width="1.8" height="0.6" fill="#4fd455" opacity="0.7"/><rect x="154" y="161.6" width="1.8" height="0.6" fill="#4fd455" opacity="0.7"/><rect x="190" y="161.6" width="1.8" height="0.6" fill="#4fd455" opacity="0.7"/><rect x="226" y="161.6" width="1.8" height="0.6" fill="#4fd455" opacity="0.7"/><rect x="251" y="161.6" width="1.8" height="0.6" fill="#4fd455" opacity="0.7"/><rect x="118" y="335.3" width="1.8" height="0.6" fill="#4fd455" opacity="0.7"/><rect x="154" y="335.3" width="1.8" height="0.6" fill="#4fd455" opacity="0.7"/><rect x="190" y="335.3" width="1.8" height="0.6" fill="#4fd455" opacity="0.7"/><rect x="226" y="335.3" width="1.8" height="0.6" fill="#4fd455" opacity="0.7"/><rect x="251" y="335.3" width="1.8" height="0.6" fill="#4fd455" opacity="0.7"/><rect x="109" y="335.3" width="1.8" height="0.6" fill="#4fd455" opacity="0.7"/><rect x="167.6" y="346.4" width="20.4" height="2.3" fill="#e8eaec" opacity="0.55"/><path d="M166.8 350 L189 350" stroke="#a6abb0" stroke-width="0.6"/><path d="M189 350 L195 350" stroke="#a6abb0" stroke-width="0.4"/><rect x="197" y="347" width="3" height="0.6" fill="#ccc" opacity="0.7"/><path d="M205.6 349.4 h6 l2 -1.6 h1" stroke="#a6abb0" stroke-width="0.4" fill="none"/><rect x="212.4" y="345.6" width="2.4" height="0.7" fill="#ccc" opacity="0.7"/><path d="M302.3 197.7 L320.7 197.7" stroke="#d9cc26" stroke-width="1.25"/><path d="M310.7 198 L310.7 204.3" stroke="#d9cc26" stroke-width="1.1"/><path d="M309 204.6 L312.6 204.6" stroke="#d9cc26" stroke-width="0.8"/><rect x="302.3" y="196.8" width="1.6" height="1.8" fill="#e0454a"/><rect x="318.6" y="196.8" width="2" height="1.8" fill="#e0454a"/><path d="M321 196.5 h5 v2.6 h-5 z" stroke="#17ab1e" stroke-width="0.7" fill="none"/><path d="M303 194.6 v-1.2 h5.6 q1.6 0 2 2" stroke="#a6abb0" stroke-width="0.5" fill="none"/><path d="M312.6 195 q.4 -1.6 2 -1.6 h6 v1.2" stroke="#a6abb0" stroke-width="0.5" fill="none"/><path d="M312.6 199.6 L319 199.6" stroke="#a6abb0" stroke-width="0.4"/><path d="M313 201.4 L318 201.4" stroke="#a6abb0" stroke-width="0.4"/><path d="M335 197.7 L347.7 197.7" stroke="#d9cc26" stroke-width="1.25"/><path d="M338 198 L338 204.3" stroke="#d9cc26" stroke-width="1.1"/><path d="M336.4 204.6 L339.8 204.6" stroke="#d9cc26" stroke-width="0.8"/><path d="M336.6 196 L339.6 200.4" stroke="#d9cc26" stroke-width="0.8" fill="none"/><rect x="346" y="196.8" width="1.8" height="1.8" fill="#e0454a"/><path d="M348 196.5 h4.4 v2.6 h-4.4 z" stroke="#17ab1e" stroke-width="0.7" fill="none"/><path d="M335.6 194.6 v-1.2 h4.6 q1.6 0 2 2" stroke="#a6abb0" stroke-width="0.5" fill="none"/><path d="M343.6 195 q.4 -1.6 2 -1.6 h5.4 v1.2" stroke="#a6abb0" stroke-width="0.5" fill="none"/><path d="M343 199.6 L349 199.6" stroke="#a6abb0" stroke-width="0.4"/><path d="M343.4 201.4 L348 201.4" stroke="#a6abb0" stroke-width="0.4"/><path d="M329.6 199.8 h3 l2.2 1.6" stroke="#a6abb0" stroke-width="0.45" fill="none"/><rect x="329.4" y="198.8" width="2.6" height="0.7" fill="#ddd" opacity="0.7"/><rect x="319.4" y="207.6" width="16.4" height="1.8" fill="#e4e6e8" opacity="0.5"/><path d="M318.6 210.6 L336.6 210.6" stroke="#a6abb0" stroke-width="0.55"/><path d="M303.2 216 L303.2 234.3" stroke="#d9cc26" stroke-width="0.9"/><path d="M314.7 216 L314.7 234.3" stroke="#d9cc26" stroke-width="0.9"/><path d="M303.2 216 L305 216" stroke="#a6abb0" stroke-width="0.4"/><path d="M313 216 L314.7 216" stroke="#a6abb0" stroke-width="0.4"/><path d="M303.2 234.3 L305 234.3" stroke="#a6abb0" stroke-width="0.4"/><path d="M313 234.3 L314.7 234.3" stroke="#a6abb0" stroke-width="0.4"/><path d="M314.7 220 h4.5 M314.7 223 h3 l1.6 2.4 M309 225.4 h5.7" stroke="#a6abb0" stroke-width="0.5" fill="none"/><rect x="316" y="221" width="2.2" height="2.2" fill="#e0454a" opacity="0.9"/><path d="M319.6 222.4 h4 M320 224.6 h3.6" stroke="#17ab1e" stroke-width="0.8" fill="none"/><path d="M324 221.4 l3 -1 h2.4" stroke="#a6abb0" stroke-width="0.45" fill="none"/><path d="M317.4 227.8 L321.6 227.8" stroke="#a6abb0" stroke-width="0.4"/><rect x="305.2" y="237.6" width="14.6" height="1.8" fill="#e4e6e8" opacity="0.5"/><path d="M304.6 240.4 L320.6 240.4" stroke="#a6abb0" stroke-width="0.5"/><path d="M337 219.6 H360.4 V223 H337 Z" stroke="#a6abb0" stroke-width="0.5" fill="none"/><path d="M332.7 224.2 L362.7 224.2" stroke="#d9cc26" stroke-width="1.2"/><path d="M335.6 225 L347 236.6 M361 225 L349.4 236.6" stroke="#d9cc26" stroke-width="1.1" fill="none"/><path d="M347 219 V237 M349.2 219 V237" stroke="#d9cc26" stroke-width="0.8" fill="none"/><path d="M345.4 221.4 h5.4 v4.6 h-5.4 z" stroke="#d9cc26" stroke-width="0.8" fill="none"/><path d="M345.8 237.4 L350.6 237.4" stroke="#d9cc26" stroke-width="0.8"/><path d="M332 228.4 L342 228.4" stroke="#a6abb0" stroke-width="0.45"/><path d="M332 230.2 L342 230.2" stroke="#1fd2dc" stroke-width="0.45"/><path d="M332 232 L342 232" stroke="#a6abb0" stroke-width="0.45"/><path d="M332 233.8 L342 233.8" stroke="#e0454a" stroke-width="0.45"/><path d="M356 228.8 L365 228.8" stroke="#a6abb0" stroke-width="0.45"/><path d="M356 230.8 L365 230.8" stroke="#e0454a" stroke-width="0.45"/><path d="M356 232.6 L365 232.6" stroke="#a6abb0" stroke-width="0.45"/><rect x="338.4" y="239.8" width="17" height="1.5" fill="#d8dadc" opacity="0.42"/><path d="M296 253.7 H320.1 V269.4 H296 Z" stroke="#a6abb0" stroke-width="0.5" fill="none"/><path d="M296 256.3 L320.1 256.3" stroke="#a6abb0" stroke-width="0.4"/><path d="M296 258.9 L320.1 258.9" stroke="#a6abb0" stroke-width="0.4"/><path d="M296 261.5 L320.1 261.5" stroke="#a6abb0" stroke-width="0.4"/><path d="M296 264.1 L320.1 264.1" stroke="#a6abb0" stroke-width="0.4"/><path d="M296 266.8 L320.1 266.8" stroke="#a6abb0" stroke-width="0.4"/><path d="M303.5 253.7 L303.5 269.4" stroke="#a6abb0" stroke-width="0.4"/><path d="M314.5 253.7 L314.5 269.4" stroke="#a6abb0" stroke-width="0.4"/><rect x="305" y="251.6" width="6" height="1.2" fill="#ddd" opacity="0.7"/><rect x="298.4" y="254.4" width="2.4" height="0.9" fill="#cfd2d5" opacity="0.6"/><rect x="306.4" y="254.4" width="5" height="0.9" fill="#cfd2d5" opacity="0.6"/><rect x="316" y="254.4" width="2.4" height="0.9" fill="#cfd2d5" opacity="0.6"/><rect x="298.4" y="257" width="2.4" height="0.9" fill="#cfd2d5" opacity="0.6"/><rect x="306.4" y="257" width="5" height="0.9" fill="#cfd2d5" opacity="0.6"/><rect x="316" y="257" width="2.4" height="0.9" fill="#cfd2d5" opacity="0.6"/><rect x="298.4" y="259.6" width="2.4" height="0.9" fill="#cfd2d5" opacity="0.6"/><rect x="306.4" y="259.6" width="5" height="0.9" fill="#cfd2d5" opacity="0.6"/><rect x="316" y="259.6" width="2.4" height="0.9" fill="#cfd2d5" opacity="0.6"/><rect x="298.4" y="262.2" width="2.4" height="0.9" fill="#cfd2d5" opacity="0.6"/><rect x="306.4" y="262.2" width="5" height="0.9" fill="#cfd2d5" opacity="0.6"/><rect x="316" y="262.2" width="2.4" height="0.9" fill="#cfd2d5" opacity="0.6"/><rect x="298.4" y="264.8" width="2.4" height="0.9" fill="#cfd2d5" opacity="0.6"/><rect x="306.4" y="264.8" width="5" height="0.9" fill="#cfd2d5" opacity="0.6"/><rect x="316" y="264.8" width="2.4" height="0.9" fill="#cfd2d5" opacity="0.6"/><rect x="298.4" y="267.5" width="2.4" height="0.9" fill="#cfd2d5" opacity="0.6"/><rect x="306.4" y="267.5" width="5" height="0.9" fill="#cfd2d5" opacity="0.6"/><rect x="316" y="267.5" width="2.4" height="0.9" fill="#cfd2d5" opacity="0.6"/><path d="M334.5 270.6 L343.6 270.6" stroke="#d9cc26" stroke-width="1.3"/><path d="M338.9 271 L338.9 275" stroke="#d9cc26" stroke-width="1.4"/><path d="M336.6 275.4 L341.4 275.4" stroke="#d9cc26" stroke-width="0.9"/><path d="M334.4 269.4 v-2.6 h2 M336.8 267.8 h5 M342.6 269.4 v-3 l2.4 -1.6 h2" stroke="#17ab1e" stroke-width="0.7" fill="none"/><path d="M336 266 l2 -2 h3 l1.6 1.6" stroke="#17ab1e" stroke-width="0.55" fill="none"/><path d="M343.4 265 L348.6 263.6" stroke="#a6abb0" stroke-width="0.4"/><rect x="328.4" y="278.6" width="26.4" height="1.8" fill="#e4e6e8" opacity="0.5"/><path d="M327.6 281.6 L355.6 281.6" stroke="#a6abb0" stroke-width="0.5"/><rect x="303.2" y="295.6" width="2.6" height="1.6" fill="#ddd" opacity="0.7"/><rect x="304.2" y="297.6" width="35.4" height="1.3" fill="#c8ccd0" opacity="0.45"/><rect x="304.2" y="300.5" width="43.4" height="1.3" fill="#c8ccd0" opacity="0.45"/><rect x="304.2" y="303.5" width="38.2" height="1.3" fill="#c8ccd0" opacity="0.45"/><rect x="304.2" y="306.5" width="35.4" height="1.3" fill="#c8ccd0" opacity="0.45"/><rect x="304.2" y="309.5" width="30" height="1.3" fill="#c8ccd0" opacity="0.45"/><rect x="304.2" y="312.1" width="53.8" height="1.3" fill="#c8ccd0" opacity="0.45"/><path d="M267.3 350.9 H370.4 V363 H267.3 Z" stroke="#1fd2dc" stroke-width="0.65" fill="none"/><path d="M267.3 356 L370.6 356" stroke="#1fd2dc" stroke-width="0.5"/><path d="M276.4 359.4 L370.6 359.4" stroke="#1fd2dc" stroke-width="0.5"/><path d="M276.4 356 L276.4 362.8" stroke="#1fd2dc" stroke-width="0.5"/><path d="M308.6 350.9 L308.6 356" stroke="#1fd2dc" stroke-width="0.5"/><path d="M317 350.9 L317 362.8" stroke="#1fd2dc" stroke-width="0.5"/><path d="M325.3 350.9 L325.3 362.8" stroke="#1fd2dc" stroke-width="0.5"/><path d="M334.4 350.9 L334.4 362.8" stroke="#1fd2dc" stroke-width="0.5"/><path d="M342 356 L342 362.8" stroke="#1fd2dc" stroke-width="0.5"/><path d="M352.4 356 L352.4 362.8" stroke="#1fd2dc" stroke-width="0.5"/><rect x="267.6" y="351.4" width="4.4" height="4.2" fill="#1fd2dc"/><rect x="274" y="351.8" width="33" height="2" fill="#bff6fa" opacity="0.9"/><rect x="274" y="354.5" width="21" height="0.8" fill="#1fd2dc" opacity="0.8"/><rect x="269" y="357.4" width="5" height="1.1" fill="#38d5de" opacity="0.42"/><rect x="283" y="356.9" width="24" height="1.1" fill="#38d5de" opacity="0.42"/><rect x="278" y="360.4" width="6" height="1.1" fill="#38d5de" opacity="0.42"/><rect x="297" y="360.4" width="10" height="1.1" fill="#38d5de" opacity="0.42"/><rect x="312" y="352.4" width="4" height="1.1" fill="#38d5de" opacity="0.42"/><rect x="320" y="352.2" width="3.4" height="1.1" fill="#38d5de" opacity="0.42"/><rect x="328" y="352.4" width="4" height="1.1" fill="#38d5de" opacity="0.42"/><rect x="339" y="352.4" width="9" height="1.1" fill="#38d5de" opacity="0.42"/><rect x="327" y="356.9" width="5" height="1.1" fill="#38d5de" opacity="0.42"/><rect x="336" y="356.9" width="4" height="1.1" fill="#38d5de" opacity="0.42"/><rect x="344" y="356.9" width="6" height="1.1" fill="#38d5de" opacity="0.42"/><rect x="355" y="356.9" width="10" height="1.1" fill="#38d5de" opacity="0.42"/><rect x="327" y="360.3" width="5" height="1.1" fill="#38d5de" opacity="0.42"/><rect x="336" y="360.3" width="4" height="1.1" fill="#38d5de" opacity="0.42"/><rect x="344" y="360.3" width="6" height="1.1" fill="#38d5de" opacity="0.42"/><rect x="355" y="360.3" width="9" height="1.1" fill="#38d5de" opacity="0.42"/><rect x="310" y="357.6" width="5" height="1.1" fill="#38d5de" opacity="0.42"/><rect x="319" y="357.6" width="4" height="1.1" fill="#38d5de" opacity="0.42"/><rect x="310" y="360.6" width="5" height="1.1" fill="#38d5de" opacity="0.42"/><rect x="319" y="360.6" width="4" height="1.1" fill="#38d5de" opacity="0.42"/><rect x="331.6" y="357" width="1.4" height="1.6" fill="#fff" opacity="0.9"/><rect x="331.6" y="360.2" width="1.4" height="1.6" fill="#fff" opacity="0.9"/><rect x="349" y="357" width="1.4" height="1.6" fill="#fff" opacity="0.9"/><rect x="349" y="360.2" width="1.4" height="1.6" fill="#fff" opacity="0.9"/><rect x="390.6" y="260.4" width="3.6" height="3.8" fill="#d9dde1" stroke="#8b939b" stroke-width=".4"/><path d="M391.4 261.2 l2 2.2 m0 -2.2 l-2 2.2" stroke="#6b737b" stroke-width=".4"/><path d="M0 255.6 L2.6 258.4 L1.5 258.6 L2.6 261 L1.8 261.4 L.8 259 L0 259.8 Z" fill="#fff" stroke="#555" stroke-width=".3"/></g></svg><div id="winR"><div class="tb"></div><div class="wbtnR" style="left:348.2px;width:12px"></div><div class="wbtnR" style="left:361.8px;width:12.4px"></div><div class="wbtnR close" style="left:376.1px;width:12px"></div><div class="content"></div><div class="bot"></div></div><svg class="full" viewBox="0 0 790 400"><defs><linearGradient id="colg" x1="0" x2="1" y1="0" y2="0"><stop offset="0" stop-color="#f4cc58"/><stop offset=".3" stop-color="#f0b824"/><stop offset=".65" stop-color="#eaac1c"/><stop offset="1" stop-color="#cf951a"/></linearGradient><linearGradient id="colp" x1="0" x2="1" y1="0" y2="0"><stop offset="0" stop-color="#f6d57c"/><stop offset=".4" stop-color="#f3c140"/><stop offset="1" stop-color="#efb936"/></linearGradient><clipPath id="v3clip"><rect x="399.4" y="80" width="385.8" height="315"/></clipPath></defs><rect x="399.2" y="70.4" width="5.4" height="6.2" fill="#2a9a2e"/><path d="M400.4 71.4 h2 q1.4 0 1.4 1.3 q0 1.3 -1.4 1.3 h-.9 v1.8 h-1.1 z" fill="#e8f5e8"/><rect x="401.6" y="74.6" width="3.2" height="2" fill="#d8742a"/><g><text x="407.3" y="75.9" font-size="5.35" fill="#2a2a2a" stroke="#2a2a2a" stroke-width=".15">View_1 (3D</text><text x="434.95" y="75.9" font-size="5.35" fill="#2a2a2a" stroke="#2a2a2a" stroke-width=".15">：默认视图</text><text x="461.7" y="75.9" font-size="5.35" fill="#2a2a2a" stroke="#2a2a2a" stroke-width=".15">)</text></g><rect x="748" y="73.6" width="4.6" height="1.6" rx=".5" fill="#fff" stroke="#5a6a80" stroke-width=".4"/><rect x="762.6" y="72.4" width="3.6" height="3" fill="#fff" stroke="#4a5a70" stroke-width=".5"/><rect x="763.2" y="72.4" width="2.6" height="1" fill="#4a5a70"/><path d="M776.9 72.2 l3 3.2 m0 -3.2 l-3 3.2" stroke="#fff" stroke-width="1"/><g clip-path="url(#v3clip)" fill="none"><path d="M447.8 80 L447.8 177" stroke="#c9d9e6" stroke-width="1.6" opacity="0.8" /><path d="M399 167.6 L447.8 177" stroke="#9fcdf0" stroke-width="0.7" /><path d="M447.8 177 L399 229.4" stroke="#9fcdf0" stroke-width="0.7" /><path d="M447.8 176.4 L726 230.4" stroke="#9fcdf0" stroke-width="0.6" opacity="0.9" /><path d="M447.8 178.4 L726 232.4" stroke="#9fcdf0" stroke-width="0.6" opacity="0.9" /><path d="M726 231.4 L785 242.8" stroke="#9fcdf0" stroke-width="0.6" /><path d="M724.2 231 L724.2 395" stroke="#bcd3e6" stroke-width="1.2" opacity="0.9" /><path d="M399 359 L583 395" stroke="#9fcdf0" stroke-width="0.7" /><path d="M747 395 L785 350.6" stroke="#9fcdf0" stroke-width="0.7" /><path d="M757 194.4 L785 159.6" stroke="#9fcdf0" stroke-width="0.7" /><path d="M398.4 247.54 L693.3 305.45" stroke="#2b2b2b" stroke-width="0.8" opacity="0.9" stroke-dasharray="4.6 1.5 1 1.5"/><path d="M416.1 226.69 L711 284.6" stroke="#2b2b2b" stroke-width="0.8" opacity="0.9" stroke-dasharray="4.6 1.5 1 1.5"/><path d="M434.5 205.01 L729.4 262.93" stroke="#2b2b2b" stroke-width="0.8" opacity="0.9" stroke-dasharray="4.6 1.5 1 1.5"/><path d="M449.4 187.46 L744.3 245.38" stroke="#2b2b2b" stroke-width="0.8" opacity="0.9" stroke-dasharray="4.6 1.5 1 1.5"/><path d="M464.2 170.02 L759.1 227.94" stroke="#2b2b2b" stroke-width="0.8" opacity="0.9" stroke-dasharray="4.6 1.5 1 1.5"/><path d="M479.5 152 L774.4 209.92" stroke="#2b2b2b" stroke-width="0.8" opacity="0.9" stroke-dasharray="4.6 1.5 1 1.5"/><path d="M406.4 255.98 L497.5 148.66" stroke="#2b2b2b" stroke-width="0.8" opacity="0.9" stroke-dasharray="4.6 1.5 1 1.5"/><path d="M458.9 266.29 L550 158.97" stroke="#2b2b2b" stroke-width="0.8" opacity="0.9" stroke-dasharray="4.6 1.5 1 1.5"/><path d="M512.3 276.78 L603.4 169.46" stroke="#2b2b2b" stroke-width="0.8" opacity="0.9" stroke-dasharray="4.6 1.5 1 1.5"/><path d="M549 283.99 L640.1 176.67" stroke="#2b2b2b" stroke-width="0.8" opacity="0.9" stroke-dasharray="4.6 1.5 1 1.5"/><path d="M586.4 291.33 L677.5 184.02" stroke="#2b2b2b" stroke-width="0.8" opacity="0.9" stroke-dasharray="4.6 1.5 1 1.5"/><path d="M623.2 298.56 L714.3 191.24" stroke="#2b2b2b" stroke-width="0.8" opacity="0.9" stroke-dasharray="4.6 1.5 1 1.5"/><path d="M675.3 308.79 L766.4 201.48" stroke="#2b2b2b" stroke-width="0.8" opacity="0.9" stroke-dasharray="4.6 1.5 1 1.5"/><rect x="543.5" y="113.16" width="3" height="52.1" fill="url(#colp)" opacity=".95"/><path d="M545.5 139.66 L596.65 149.71" stroke="#b7f0ab" stroke-width="2.4" opacity=".86"/><path d="M545.5 114.46 L596.65 124.51" stroke="#b7f0ab" stroke-width="2.4" opacity=".86"/><path d="M530.2 157 L544.5 140.15" stroke="#b7f0ab" stroke-width="2.4" opacity=".86"/><path d="M530.2 131.8 L544.5 114.95" stroke="#b7f0ab" stroke-width="2.4" opacity=".86"/><rect x="596.65" y="123.65" width="3.5" height="52.2" fill="url(#colg)"/><path d="M600.15 150.4 L634.6 157.16" stroke="#a5dba0" stroke-width="2.7"/><path d="M600.15 150.65 L634.6 157.41" stroke="#628a64" stroke-width="1.75"/><path d="M600.15 125.2 L634.6 131.96" stroke="#a5dba0" stroke-width="2.7"/><path d="M600.15 125.45 L634.6 132.21" stroke="#628a64" stroke-width="1.75"/><rect x="633.6" y="130.86" width="3" height="52.1" fill="url(#colp)" opacity=".95"/><rect x="528.2" y="131.19" width="3" height="52.1" fill="url(#colp)" opacity=".95"/><path d="M584.85 166.01 L596.65 152.11" stroke="#a5dba0" stroke-width="2.7"/><path d="M585.1 166.21 L596.9 152.31" stroke="#628a64" stroke-width="1.65"/><path d="M584.85 140.81 L596.65 126.91" stroke="#a5dba0" stroke-width="2.7"/><path d="M585.1 141.01 L596.9 127.11" stroke="#628a64" stroke-width="1.65"/><path d="M635.6 157.36 L670.75 164.26" stroke="#b7f0ab" stroke-width="2.4" opacity=".86"/><path d="M635.6 132.16 L670.75 139.06" stroke="#b7f0ab" stroke-width="2.4" opacity=".86"/><path d="M530.2 157.69 L581.35 167.73" stroke="#b7f0ab" stroke-width="2.4" opacity=".86"/><path d="M530.2 132.49 L581.35 142.53" stroke="#b7f0ab" stroke-width="2.4" opacity=".86"/><rect x="670.75" y="138.21" width="3.5" height="52.2" fill="url(#colg)"/><path d="M620.3 174.69 L634.6 157.85" stroke="#b7f0ab" stroke-width="2.4" opacity=".86"/><path d="M620.3 149.49 L634.6 132.65" stroke="#b7f0ab" stroke-width="2.4" opacity=".86"/><path d="M515.4 174.43 L529.2 158.18" stroke="#b7f0ab" stroke-width="2.4" opacity=".86"/><path d="M515.4 149.23 L529.2 132.98" stroke="#b7f0ab" stroke-width="2.4" opacity=".86"/><rect x="581.35" y="141.68" width="3.5" height="52.2" fill="url(#colg)"/><path d="M674.25 164.95 L708.8 171.73" stroke="#a5dba0" stroke-width="2.7"/><path d="M674.25 165.2 L708.8 171.98" stroke="#628a64" stroke-width="1.75"/><path d="M674.25 139.75 L708.8 146.53" stroke="#a5dba0" stroke-width="2.7"/><path d="M674.25 140 L708.8 146.78" stroke="#628a64" stroke-width="1.75"/><path d="M584.85 168.42 L619.3 175.19" stroke="#a5dba0" stroke-width="2.7"/><path d="M584.85 168.67 L619.3 175.44" stroke="#628a64" stroke-width="1.75"/><path d="M584.85 143.22 L619.3 149.99" stroke="#a5dba0" stroke-width="2.7"/><path d="M584.85 143.47 L619.3 150.24" stroke="#628a64" stroke-width="1.75"/><rect x="707.8" y="145.43" width="3" height="52.1" fill="url(#colp)" opacity=".95"/><path d="M658.95 180.57 L670.75 166.67" stroke="#a5dba0" stroke-width="2.7"/><path d="M659.2 180.77 L671 166.87" stroke="#628a64" stroke-width="1.65"/><path d="M658.95 155.37 L670.75 141.47" stroke="#a5dba0" stroke-width="2.7"/><path d="M659.2 155.57 L671 141.67" stroke="#628a64" stroke-width="1.65"/><rect x="513.4" y="148.62" width="3" height="52.1" fill="url(#colp)" opacity=".95"/><rect x="618.3" y="148.88" width="3" height="52.1" fill="url(#colp)" opacity=".95"/><path d="M570.05 183.45 L581.35 170.14" stroke="#a5dba0" stroke-width="2.7"/><path d="M570.3 183.65 L581.6 170.34" stroke="#628a64" stroke-width="1.65"/><path d="M570.05 158.25 L581.35 144.94" stroke="#a5dba0" stroke-width="2.7"/><path d="M570.3 158.45 L581.6 145.14" stroke="#628a64" stroke-width="1.65"/><path d="M709.8 171.93 L759.65 181.72" stroke="#b7f0ab" stroke-width="2.4" opacity=".86"/><path d="M709.8 146.73 L759.65 156.52" stroke="#b7f0ab" stroke-width="2.4" opacity=".86"/><path d="M620.3 175.38 L655.45 182.28" stroke="#b7f0ab" stroke-width="2.4" opacity=".86"/><path d="M620.3 150.18 L655.45 157.08" stroke="#b7f0ab" stroke-width="2.4" opacity=".86"/><path d="M515.4 175.12 L566.55 185.17" stroke="#b7f0ab" stroke-width="2.4" opacity=".86"/><path d="M515.4 149.92 L566.55 159.97" stroke="#b7f0ab" stroke-width="2.4" opacity=".86"/><path d="M694.5 189.27 L708.8 172.42" stroke="#b7f0ab" stroke-width="2.4" opacity=".86"/><path d="M694.5 164.07 L708.8 147.22" stroke="#b7f0ab" stroke-width="2.4" opacity=".86"/><rect x="759.65" y="155.67" width="3.5" height="52.2" fill="url(#colg)"/><rect x="655.45" y="156.23" width="3.5" height="52.2" fill="url(#colg)"/><path d="M500.5 191.99 L514.4 175.61" stroke="#b7f0ab" stroke-width="2.4" opacity=".86"/><path d="M500.5 166.79 L514.4 150.41" stroke="#b7f0ab" stroke-width="2.4" opacity=".86"/><path d="M605.5 192.13 L619.3 175.87" stroke="#b7f0ab" stroke-width="2.4" opacity=".86"/><path d="M605.5 166.93 L619.3 150.67" stroke="#b7f0ab" stroke-width="2.4" opacity=".86"/><rect x="566.55" y="159.11" width="3.5" height="52.2" fill="url(#colg)"/><path d="M658.95 182.97 L693.5 189.76" stroke="#a5dba0" stroke-width="2.7"/><path d="M658.95 183.22 L693.5 190.01" stroke="#628a64" stroke-width="1.75"/><path d="M658.95 157.77 L693.5 164.56" stroke="#a5dba0" stroke-width="2.7"/><path d="M658.95 158.02 L693.5 164.81" stroke="#628a64" stroke-width="1.75"/><path d="M570.05 185.85 L604.5 192.62" stroke="#a5dba0" stroke-width="2.7"/><path d="M570.05 186.1 L604.5 192.87" stroke="#628a64" stroke-width="1.75"/><path d="M570.05 160.65 L604.5 167.42" stroke="#a5dba0" stroke-width="2.7"/><path d="M570.05 160.9 L604.5 167.67" stroke="#628a64" stroke-width="1.75"/><rect x="692.5" y="163.46" width="3" height="52.1" fill="url(#colp)" opacity=".95"/><path d="M747.85 198.03 L759.65 184.13" stroke="#a5dba0" stroke-width="2.7"/><path d="M748.1 198.23 L759.9 184.33" stroke="#628a64" stroke-width="1.65"/><path d="M747.85 172.83 L759.65 158.93" stroke="#a5dba0" stroke-width="2.7"/><path d="M748.1 173.03 L759.9 159.13" stroke="#628a64" stroke-width="1.65"/><path d="M644.15 198 L655.45 184.69" stroke="#a5dba0" stroke-width="2.7"/><path d="M644.4 198.2 L655.7 184.89" stroke="#628a64" stroke-width="1.65"/><path d="M644.15 172.8 L655.45 159.49" stroke="#a5dba0" stroke-width="2.7"/><path d="M644.4 173 L655.7 159.69" stroke="#628a64" stroke-width="1.65"/><rect x="498.5" y="166.17" width="3" height="52.1" fill="url(#colp)" opacity=".95"/><rect x="603.5" y="166.32" width="3" height="52.1" fill="url(#colp)" opacity=".95"/><path d="M555.15 201 L566.55 187.57" stroke="#a5dba0" stroke-width="2.7"/><path d="M555.4 201.2 L566.8 187.77" stroke="#628a64" stroke-width="1.65"/><path d="M555.15 175.8 L566.55 162.37" stroke="#a5dba0" stroke-width="2.7"/><path d="M555.4 176 L566.8 162.57" stroke="#628a64" stroke-width="1.65"/><path d="M694.5 189.95 L744.35 199.74" stroke="#b7f0ab" stroke-width="2.4" opacity=".86"/><path d="M694.5 164.75 L744.35 174.54" stroke="#b7f0ab" stroke-width="2.4" opacity=".86"/><path d="M605.5 192.82 L640.65 199.72" stroke="#b7f0ab" stroke-width="2.4" opacity=".86"/><path d="M605.5 167.62 L640.65 174.52" stroke="#b7f0ab" stroke-width="2.4" opacity=".86"/><path d="M500.5 192.67 L551.65 202.72" stroke="#b7f0ab" stroke-width="2.4" opacity=".86"/><path d="M500.5 167.47 L551.65 177.52" stroke="#b7f0ab" stroke-width="2.4" opacity=".86"/><path d="M679.7 206.7 L693.5 190.45" stroke="#b7f0ab" stroke-width="2.4" opacity=".86"/><path d="M679.7 181.5 L693.5 165.25" stroke="#b7f0ab" stroke-width="2.4" opacity=".86"/><rect x="640.65" y="173.66" width="3.5" height="52.2" fill="url(#colg)"/><rect x="744.35" y="173.69" width="3.5" height="52.2" fill="url(#colg)"/><path d="M590.6 209.68 L604.5 193.31" stroke="#b7f0ab" stroke-width="2.4" opacity=".86"/><path d="M590.6 184.48 L604.5 168.11" stroke="#b7f0ab" stroke-width="2.4" opacity=".86"/><rect x="551.65" y="176.66" width="3.5" height="52.2" fill="url(#colg)"/><path d="M482.1 213.66 L499.5 193.16" stroke="#b7f0ab" stroke-width="2.4" opacity=".86"/><path d="M482.1 188.46 L499.5 167.96" stroke="#b7f0ab" stroke-width="2.4" opacity=".86"/><path d="M644.15 200.41 L678.7 207.19" stroke="#a5dba0" stroke-width="2.7"/><path d="M644.15 200.66 L678.7 207.44" stroke="#628a64" stroke-width="1.75"/><path d="M644.15 175.21 L678.7 181.99" stroke="#a5dba0" stroke-width="2.7"/><path d="M644.15 175.46 L678.7 182.24" stroke="#628a64" stroke-width="1.75"/><path d="M555.15 203.41 L589.6 210.17" stroke="#a5dba0" stroke-width="2.7"/><path d="M555.15 203.66 L589.6 210.42" stroke="#628a64" stroke-width="1.75"/><path d="M555.15 178.21 L589.6 184.97" stroke="#a5dba0" stroke-width="2.7"/><path d="M555.15 178.46 L589.6 185.22" stroke="#628a64" stroke-width="1.75"/><rect x="677.7" y="180.89" width="3" height="52.1" fill="url(#colp)" opacity=".95"/><path d="M733.05 215.46 L744.35 202.15" stroke="#a5dba0" stroke-width="2.7"/><path d="M733.3 215.66 L744.6 202.35" stroke="#628a64" stroke-width="1.65"/><path d="M733.05 190.26 L744.35 176.95" stroke="#a5dba0" stroke-width="2.7"/><path d="M733.3 190.46 L744.6 177.15" stroke="#628a64" stroke-width="1.65"/><path d="M629.25 215.55 L640.65 202.12" stroke="#a5dba0" stroke-width="2.7"/><path d="M629.5 215.75 L640.9 202.32" stroke="#628a64" stroke-width="1.65"/><path d="M629.25 190.35 L640.65 176.92" stroke="#a5dba0" stroke-width="2.7"/><path d="M629.5 190.55 L640.9 177.12" stroke="#628a64" stroke-width="1.65"/><rect x="588.6" y="183.87" width="3" height="52.1" fill="url(#colp)" opacity=".95"/><path d="M679.7 207.39 L729.55 217.18" stroke="#b7f0ab" stroke-width="2.4" opacity=".86"/><path d="M679.7 182.19 L729.55 191.98" stroke="#b7f0ab" stroke-width="2.4" opacity=".86"/><path d="M536.75 222.68 L551.65 205.12" stroke="#a5dba0" stroke-width="2.7"/><path d="M537 222.88 L551.9 205.32" stroke="#628a64" stroke-width="1.65"/><path d="M536.75 197.48 L551.65 179.92" stroke="#a5dba0" stroke-width="2.7"/><path d="M537 197.68 L551.9 180.12" stroke="#628a64" stroke-width="1.65"/><path d="M590.6 210.37 L625.75 217.27" stroke="#b7f0ab" stroke-width="2.4" opacity=".86"/><path d="M590.6 185.17 L625.75 192.07" stroke="#b7f0ab" stroke-width="2.4" opacity=".86"/><rect x="480.1" y="187.85" width="3" height="52.1" fill="url(#colp)" opacity=".95"/><path d="M664.8 224.25 L678.7 207.88" stroke="#b7f0ab" stroke-width="2.4" opacity=".86"/><path d="M664.8 199.05 L678.7 182.68" stroke="#b7f0ab" stroke-width="2.4" opacity=".86"/><rect x="729.55" y="191.12" width="3.5" height="52.2" fill="url(#colg)"/><rect x="625.75" y="191.22" width="3.5" height="52.2" fill="url(#colg)"/><path d="M482.1 214.35 L533.25 224.39" stroke="#b7f0ab" stroke-width="2.4" opacity=".86"/><path d="M482.1 189.15 L533.25 199.19" stroke="#b7f0ab" stroke-width="2.4" opacity=".86"/><path d="M572.2 231.36 L589.6 210.86" stroke="#b7f0ab" stroke-width="2.4" opacity=".86"/><path d="M572.2 206.16 L589.6 185.66" stroke="#b7f0ab" stroke-width="2.4" opacity=".86"/><path d="M629.25 217.96 L663.8 224.74" stroke="#a5dba0" stroke-width="2.7"/><path d="M629.25 218.21 L663.8 224.99" stroke="#628a64" stroke-width="1.75"/><path d="M629.25 192.76 L663.8 199.54" stroke="#a5dba0" stroke-width="2.7"/><path d="M629.25 193.01 L663.8 199.79" stroke="#628a64" stroke-width="1.75"/><path d="M464.4 234.51 L481.1 214.84" stroke="#b7f0ab" stroke-width="2.4" opacity=".86"/><path d="M464.4 209.31 L481.1 189.64" stroke="#b7f0ab" stroke-width="2.4" opacity=".86"/><rect x="533.25" y="198.34" width="3.5" height="52.2" fill="url(#colg)"/><rect x="662.8" y="198.44" width="3" height="52.1" fill="url(#colp)" opacity=".95"/><path d="M718.15 233.01 L729.55 219.58" stroke="#a5dba0" stroke-width="2.7"/><path d="M718.4 233.21 L729.8 219.78" stroke="#628a64" stroke-width="1.65"/><path d="M718.15 207.81 L729.55 194.38" stroke="#a5dba0" stroke-width="2.7"/><path d="M718.4 208.01 L729.8 194.58" stroke="#628a64" stroke-width="1.65"/><path d="M536.75 225.08 L571.2 231.85" stroke="#a5dba0" stroke-width="2.7"/><path d="M536.75 225.33 L571.2 232.1" stroke="#628a64" stroke-width="1.75"/><path d="M536.75 199.88 L571.2 206.65" stroke="#a5dba0" stroke-width="2.7"/><path d="M536.75 200.13 L571.2 206.9" stroke="#628a64" stroke-width="1.75"/><path d="M610.85 237.23 L625.75 219.68" stroke="#a5dba0" stroke-width="2.7"/><path d="M611.1 237.43 L626 219.88" stroke="#628a64" stroke-width="1.65"/><path d="M610.85 212.03 L625.75 194.48" stroke="#a5dba0" stroke-width="2.7"/><path d="M611.1 212.23 L626 194.68" stroke="#628a64" stroke-width="1.65"/><path d="M664.8 224.94 L714.65 234.73" stroke="#b7f0ab" stroke-width="2.4" opacity=".86"/><path d="M664.8 199.74 L714.65 209.53" stroke="#b7f0ab" stroke-width="2.4" opacity=".86"/><rect x="570.2" y="205.55" width="3" height="52.1" fill="url(#colp)" opacity=".95"/><rect x="714.65" y="208.68" width="3.5" height="52.2" fill="url(#colg)"/><rect x="462.4" y="208.7" width="3" height="52.1" fill="url(#colp)" opacity=".95"/><path d="M519.05 243.53 L533.25 226.8" stroke="#a5dba0" stroke-width="2.7"/><path d="M519.3 243.73 L533.5 227" stroke="#628a64" stroke-width="1.65"/><path d="M519.05 218.33 L533.25 201.6" stroke="#a5dba0" stroke-width="2.7"/><path d="M519.3 218.53 L533.5 201.8" stroke="#628a64" stroke-width="1.65"/><path d="M572.2 232.04 L607.35 238.95" stroke="#b7f0ab" stroke-width="2.4" opacity=".86"/><path d="M572.2 206.84 L607.35 213.75" stroke="#b7f0ab" stroke-width="2.4" opacity=".86"/><path d="M646.4 245.93 L663.8 225.43" stroke="#b7f0ab" stroke-width="2.4" opacity=".86"/><path d="M646.4 220.73 L663.8 200.23" stroke="#b7f0ab" stroke-width="2.4" opacity=".86"/><rect x="607.35" y="212.89" width="3.5" height="52.2" fill="url(#colg)"/><path d="M464.4 235.2 L515.55 245.24" stroke="#b7f0ab" stroke-width="2.4" opacity=".86"/><path d="M464.4 210 L515.55 220.04" stroke="#b7f0ab" stroke-width="2.4" opacity=".86"/><path d="M554.5 252.21 L571.2 232.53" stroke="#b7f0ab" stroke-width="2.4" opacity=".86"/><path d="M554.5 227.01 L571.2 207.33" stroke="#b7f0ab" stroke-width="2.4" opacity=".86"/><path d="M610.85 239.63 L645.4 246.42" stroke="#a5dba0" stroke-width="2.7"/><path d="M610.85 239.88 L645.4 246.67" stroke="#628a64" stroke-width="1.75"/><path d="M610.85 214.43 L645.4 221.22" stroke="#a5dba0" stroke-width="2.7"/><path d="M610.85 214.68 L645.4 221.47" stroke="#628a64" stroke-width="1.75"/><rect x="515.55" y="219.19" width="3.5" height="52.2" fill="url(#colg)"/><path d="M699.75 254.69 L714.65 237.14" stroke="#a5dba0" stroke-width="2.7"/><path d="M700 254.89 L714.9 237.34" stroke="#628a64" stroke-width="1.65"/><path d="M699.75 229.49 L714.65 211.94" stroke="#a5dba0" stroke-width="2.7"/><path d="M700 229.69 L714.9 212.14" stroke="#628a64" stroke-width="1.65"/><rect x="644.4" y="220.12" width="3" height="52.1" fill="url(#colp)" opacity=".95"/><path d="M519.05 245.93 L553.5 252.7" stroke="#a5dba0" stroke-width="2.7"/><path d="M519.05 246.18 L553.5 252.95" stroke="#628a64" stroke-width="1.75"/><path d="M519.05 220.73 L553.5 227.5" stroke="#a5dba0" stroke-width="2.7"/><path d="M519.05 220.98 L553.5 227.75" stroke="#628a64" stroke-width="1.75"/><path d="M593.15 258.08 L607.35 241.35" stroke="#a5dba0" stroke-width="2.7"/><path d="M593.4 258.28 L607.6 241.55" stroke="#628a64" stroke-width="1.65"/><path d="M593.15 232.88 L607.35 216.15" stroke="#a5dba0" stroke-width="2.7"/><path d="M593.4 233.08 L607.6 216.35" stroke="#628a64" stroke-width="1.65"/><path d="M646.4 246.62 L696.25 256.41" stroke="#b7f0ab" stroke-width="2.4" opacity=".86"/><path d="M646.4 221.42 L696.25 231.21" stroke="#b7f0ab" stroke-width="2.4" opacity=".86"/><rect x="552.5" y="226.4" width="3" height="52.1" fill="url(#colp)" opacity=".95"/><path d="M554.5 252.89 L589.65 259.8" stroke="#b7f0ab" stroke-width="2.4" opacity=".86"/><path d="M554.5 227.69 L589.65 234.6" stroke="#b7f0ab" stroke-width="2.4" opacity=".86"/><rect x="696.25" y="230.35" width="3.5" height="52.2" fill="url(#colg)"/><path d="M628.7 266.78 L645.4 247.11" stroke="#b7f0ab" stroke-width="2.4" opacity=".86"/><path d="M628.7 241.58 L645.4 221.91" stroke="#b7f0ab" stroke-width="2.4" opacity=".86"/><rect x="589.65" y="233.74" width="3.5" height="52.2" fill="url(#colg)"/><path d="M593.15 260.48 L627.7 267.27" stroke="#a5dba0" stroke-width="2.7"/><path d="M593.15 260.73 L627.7 267.52" stroke="#628a64" stroke-width="1.75"/><path d="M593.15 235.28 L627.7 242.07" stroke="#a5dba0" stroke-width="2.7"/><path d="M593.15 235.53 L627.7 242.32" stroke="#628a64" stroke-width="1.75"/><path d="M682.05 275.54 L696.25 258.81" stroke="#a5dba0" stroke-width="2.7"/><path d="M682.3 275.74 L696.5 259.01" stroke="#628a64" stroke-width="1.65"/><path d="M682.05 250.34 L696.25 233.61" stroke="#a5dba0" stroke-width="2.7"/><path d="M682.3 250.54 L696.5 233.81" stroke="#628a64" stroke-width="1.65"/><rect x="626.7" y="240.97" width="3" height="52.1" fill="url(#colp)" opacity=".95"/><path d="M628.7 267.47 L678.55 277.26" stroke="#b7f0ab" stroke-width="2.4" opacity=".86"/><path d="M628.7 242.27 L678.55 252.06" stroke="#b7f0ab" stroke-width="2.4" opacity=".86"/><rect x="678.55" y="251.2" width="3.5" height="52.2" fill="url(#colg)"/><text x="412.1" y="228.34" font-size="5.6" fill="#222" text-anchor="middle" stroke="#222" stroke-width=".1">B</text><text x="430.5" y="206.66" font-size="5.6" fill="#222" text-anchor="middle" stroke="#222" stroke-width=".1">C</text><text x="445.4" y="189.11" font-size="5.6" fill="#222" text-anchor="middle" stroke="#222" stroke-width=".1">D</text><text x="460.2" y="171.68" font-size="5.6" fill="#222" text-anchor="middle" stroke="#222" stroke-width=".1">E</text><text x="475.5" y="153.65" font-size="5.6" fill="#222" text-anchor="middle" stroke="#222" stroke-width=".1">F</text><text x="697.7" y="308.1" font-size="5.6" fill="#222" text-anchor="middle" stroke="#222" stroke-width=".1">A</text><text x="715.4" y="287.25" font-size="5.6" fill="#222" text-anchor="middle" stroke="#222" stroke-width=".1">B</text><text x="733.8" y="265.58" font-size="5.6" fill="#222" text-anchor="middle" stroke="#222" stroke-width=".1">C</text><text x="748.7" y="248.02" font-size="5.6" fill="#222" text-anchor="middle" stroke="#222" stroke-width=".1">D</text><text x="763.5" y="230.59" font-size="5.6" fill="#222" text-anchor="middle" stroke="#222" stroke-width=".1">E</text><text x="778.8" y="212.57" font-size="5.6" fill="#222" text-anchor="middle" stroke="#222" stroke-width=".1">F</text><text x="404.8" y="259.79" font-size="4.7" fill="#1c1c1c" text-anchor="middle" font-style="italic" stroke="#1c1c1c" stroke-width=".12">1</text><text x="499.5" y="148.15" font-size="4.7" fill="#1c1c1c" text-anchor="middle" font-style="italic" stroke="#1c1c1c" stroke-width=".12">1</text><text x="457.3" y="270.1" font-size="4.7" fill="#1c1c1c" text-anchor="middle" font-style="italic" stroke="#1c1c1c" stroke-width=".12">2</text><text x="552" y="158.46" font-size="4.7" fill="#1c1c1c" text-anchor="middle" font-style="italic" stroke="#1c1c1c" stroke-width=".12">2</text><text x="510.7" y="280.59" font-size="4.7" fill="#1c1c1c" text-anchor="middle" font-style="italic" stroke="#1c1c1c" stroke-width=".12">3</text><text x="605.4" y="168.95" font-size="4.7" fill="#1c1c1c" text-anchor="middle" font-style="italic" stroke="#1c1c1c" stroke-width=".12">3</text><text x="547.4" y="287.8" font-size="4.7" fill="#1c1c1c" text-anchor="middle" font-style="italic" stroke="#1c1c1c" stroke-width=".12">4</text><text x="642.1" y="176.16" font-size="4.7" fill="#1c1c1c" text-anchor="middle" font-style="italic" stroke="#1c1c1c" stroke-width=".12">4</text><text x="584.8" y="295.14" font-size="4.7" fill="#1c1c1c" text-anchor="middle" font-style="italic" stroke="#1c1c1c" stroke-width=".12">5</text><text x="679.5" y="183.51" font-size="4.7" fill="#1c1c1c" text-anchor="middle" font-style="italic" stroke="#1c1c1c" stroke-width=".12">5</text><text x="621.6" y="302.37" font-size="4.7" fill="#1c1c1c" text-anchor="middle" font-style="italic" stroke="#1c1c1c" stroke-width=".12">6</text><text x="716.3" y="190.73" font-size="4.7" fill="#1c1c1c" text-anchor="middle" font-style="italic" stroke="#1c1c1c" stroke-width=".12">6</text><text x="673.7" y="312.6" font-size="4.7" fill="#1c1c1c" text-anchor="middle" font-style="italic" stroke="#1c1c1c" stroke-width=".12">7</text><text x="768.4" y="200.97" font-size="4.7" fill="#1c1c1c" text-anchor="middle" font-style="italic" stroke="#1c1c1c" stroke-width=".12">7</text><g fill="none" stroke-width=".7"><path d="M412.4 243.2 L414.6 241 H421.8 V247.6 L419.6 250 H412.4 Z M412.4 243.2 H419.6 V250 M419.6 243.2 L421.8 241 M414.6 241 V247.6 H421.8 M412.4 250 L414.6 247.6" stroke="#2f6f33"/><path d="M411.2 243.6 V250" stroke="#2a3fd0" stroke-width="1.2"/><path d="M411.6 250.6 L418.6 252" stroke="#e0a020" stroke-width="1.1"/></g><g fill="none"><path d="M746.6 364.4 V342.6" stroke="#1f2fe0" stroke-width="1"/><path d="M746.6 340.2 l-1.4 3.4 h2.8 z" fill="#1f2fe0"/><path d="M746.6 364.4 L754.4 354.6" stroke="#28c23a" stroke-width="1"/><path d="M756 352.6 l-3 1.6 l2 1.7 z" fill="#28c23a"/><path d="M746.6 364.4 L768.6 368.2" stroke="#e23a2a" stroke-width="1"/><path d="M771.6 368.7 l-3.6 -1.9 l-.5 2.9 z" fill="#8a1d14"/></g><text x="747.4" y="343.6" font-size="5" fill="#2a3ad8" text-anchor="middle" font-weight="bold">z</text><text x="758.4" y="355" font-size="5" fill="#28b03a" text-anchor="middle" >y</text><text x="773.4" y="372.4" font-size="5.4" fill="#d0463a" text-anchor="middle" >x</text></g></svg><div id="v3-text"><span class="sr" style="left:407.3px;top:71.09px;font-size:5.35px;width:57.19px">View_1 (3D：默认视图)</span></div><div id="dlg"><div class="glass"></div><div class="frameL"></div><div class="frameR"></div><div class="frameB"></div><div class="client"></div><div class="close"></div><div class="dbtn" style="left:35.7px;top:32.3px;width:32.9px"></div><div class="dbtn" style="left:83.4px;top:32.3px;width:33.3px"></div><div class="dbtn" style="left:66.7px;top:52.3px;width:29.4px;height:8.9px"></div><div class="dbtn" style="left:109.4px;top:52px;width:30.4px"></div></div><svg class="full" viewBox="0 0 790 400"><defs><filter id="blur1"><feGaussianBlur stdDeviation="1.2"/></filter></defs><rect x="11" y="72.2" width="32" height="8.2" rx="3" fill="#fff" opacity=".35" filter="url(#blur1)"/><g><text x="12.2" y="78.6" font-size="4.94" fill="#111" stroke="#111" stroke-width=".15">钢框架柱识别</text></g><path d="M146.6 72.6 l3 3 m0 -3 l-3 3" stroke="#fff" stroke-width="1.1"/><g><text x="15.8" y="92.9" font-size="4.94" fill="#222" stroke="#222" stroke-width=".15">钢柱识取流程（依次点击按钮完成钢柱识别）：</text></g><g><text x="46.08" y="108.6" font-size="4.94" fill="#111" stroke="#111" stroke-width=".15">选择钢柱图形</text></g><g><text x="93.98" y="108.6" font-size="4.94" fill="#111" stroke="#111" stroke-width=".15">选择钢柱标注</text></g><g><text x="77.75" y="128.7" font-size="4.94" fill="#111" stroke="#111" stroke-width=".15">转换钢模型</text></g><g><text x="128.26" y="128.3" font-size="4.94" fill="#111" stroke="#111" stroke-width=".15">取消</text></g></svg><div id="dlg-text"><span class="sr" style="left:12.2px;top:74.15px;font-size:4.94px;width:30.64px">钢框架柱识别</span><span class="sr" style="left:15.8px;top:88.45px;font-size:4.94px;width:104.74px">钢柱识取流程（依次点击按钮完成钢柱识别）：</span><span class="sr" style="left:46.08px;top:104.15px;font-size:4.94px;width:30.64px">选择钢柱图形</span><span class="sr" style="left:93.98px;top:104.15px;font-size:4.94px;width:30.64px">选择钢柱标注</span><span class="sr" style="left:77.75px;top:124.25px;font-size:4.94px;width:25.7px">转换钢模型</span><span class="sr" style="left:128.26px;top:123.85px;font-size:4.94px;width:10.88px">取消</span></div></body></html>
